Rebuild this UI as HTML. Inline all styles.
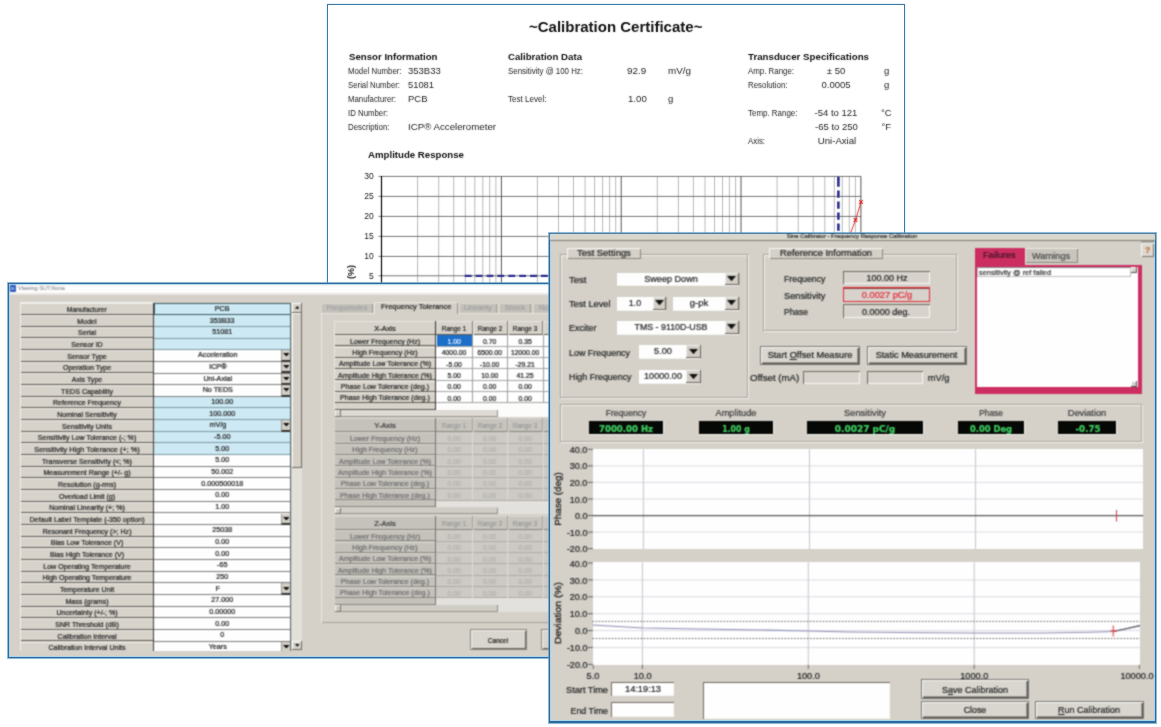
<!DOCTYPE html>
<html><head><meta charset="utf-8"><title>Calibration</title>
<style>
html,body{margin:0;padding:0;background:#fff}
body{width:1161px;height:727px;position:relative;overflow:hidden;font-family:"Liberation Sans",sans-serif}
.t{position:absolute;white-space:pre;display:block}
.w .t{-webkit-text-stroke:0.22px currentColor}
</style></head><body>
<svg width="0" height="0" style="position:absolute"><filter id="soft" x="0" y="0" width="100%" height="100%" color-interpolation-filters="sRGB"><feConvolveMatrix order="3" kernelMatrix="1 2 1 2 6 2 1 2 1" divisor="18" edgeMode="duplicate"/></filter><filter id="soft2" x="0" y="0" width="100%" height="100%" color-interpolation-filters="sRGB"><feConvolveMatrix order="3" kernelMatrix="1 2 1 2 16 2 1 2 1" divisor="28" edgeMode="duplicate"/></filter></svg>
<div id="cert" style="position:absolute;left:327px;top:4px;width:576px;height:290px;background:#fff;border:1px solid #3b79a9;box-shadow:0 0 1.5px #9fd0f0"></div>
<div style="position:absolute;left:0;top:0;width:1161px;height:727px;filter:url(#soft2)"><span class="t" style="left:529.0px;top:19.3px;font-size:15px;line-height:15px;color:#111;font-weight:700;">~Calibration Certificate~</span>
<span class="t" style="left:348.5px;top:51.9px;font-size:9.6px;line-height:9.6px;color:#111;font-weight:700;transform:scaleX(1.006);transform-origin:0 0;">Sensor Information</span>
<span class="t" style="left:508.0px;top:51.9px;font-size:9.6px;line-height:9.6px;color:#111;font-weight:700;transform:scaleX(1.006);transform-origin:0 0;">Calibration Data</span>
<span class="t" style="left:748.0px;top:51.9px;font-size:9.6px;line-height:9.6px;color:#111;font-weight:700;transform:scaleX(1.013);transform-origin:0 0;">Transducer Specifications</span>
<span class="t" style="left:348.0px;top:65.8px;font-size:9.5px;line-height:9.5px;color:#222;transform:scaleX(0.824);transform-origin:0 0;">Model Number:</span>
<span class="t" style="left:348.0px;top:79.8px;font-size:9.5px;line-height:9.5px;color:#222;transform:scaleX(0.821);transform-origin:0 0;">Serial Number:</span>
<span class="t" style="left:348.0px;top:93.8px;font-size:9.5px;line-height:9.5px;color:#222;transform:scaleX(0.819);transform-origin:0 0;">Manufacturer:</span>
<span class="t" style="left:348.0px;top:107.8px;font-size:9.5px;line-height:9.5px;color:#222;transform:scaleX(0.823);transform-origin:0 0;">ID Number:</span>
<span class="t" style="left:348.0px;top:121.8px;font-size:9.5px;line-height:9.5px;color:#222;transform:scaleX(0.827);transform-origin:0 0;">Description:</span>
<span class="t" style="left:408.0px;top:65.8px;font-size:9.5px;line-height:9.5px;color:#222;">353B33</span>
<span class="t" style="left:408.0px;top:79.8px;font-size:9.5px;line-height:9.5px;color:#222;transform:scaleX(0.984);transform-origin:0 0;">51081</span>
<span class="t" style="left:408.0px;top:93.8px;font-size:9.5px;line-height:9.5px;color:#222;">PCB</span>
<span class="t" style="left:408.0px;top:121.8px;font-size:9.5px;line-height:9.5px;color:#222;transform:scaleX(1.021);transform-origin:0 0;">ICP® Accelerometer</span>
<span class="t" style="left:508.0px;top:65.8px;font-size:9.5px;line-height:9.5px;color:#222;transform:scaleX(0.829);transform-origin:0 0;">Sensitivity @ 100 Hz:</span>
<span class="t" style="left:508.0px;top:93.8px;font-size:9.5px;line-height:9.5px;color:#222;transform:scaleX(0.848);transform-origin:0 0;">Test Level:</span>
<span class="t" style="left:627.0px;top:65.8px;font-size:9.5px;line-height:9.5px;color:#222;transform:scaleX(1.043);transform-origin:0 0;">92.9</span>
<span class="t" style="left:668.0px;top:65.8px;font-size:9.5px;line-height:9.5px;color:#222;transform:scaleX(1.037);transform-origin:0 0;">mV/g</span>
<span class="t" style="left:627.5px;top:93.8px;font-size:9.5px;line-height:9.5px;color:#222;transform:scaleX(1.016);transform-origin:0 0;">1.00</span>
<span class="t" style="left:668.0px;top:93.8px;font-size:9.5px;line-height:9.5px;color:#222;">g</span>
<span class="t" style="left:748.0px;top:65.8px;font-size:9.5px;line-height:9.5px;color:#222;transform:scaleX(0.830);transform-origin:0 0;">Amp. Range:</span>
<span class="t" style="left:748.0px;top:79.8px;font-size:9.5px;line-height:9.5px;color:#222;transform:scaleX(0.831);transform-origin:0 0;">Resolution:</span>
<span class="t" style="left:748.0px;top:107.8px;font-size:9.5px;line-height:9.5px;color:#222;transform:scaleX(0.837);transform-origin:0 0;">Temp. Range:</span>
<span class="t" style="left:748.0px;top:135.8px;font-size:9.5px;line-height:9.5px;color:#222;transform:scaleX(0.825);transform-origin:0 0;">Axis:</span>
<span class="t" style="left:836.0px;top:65.8px;font-size:9.5px;line-height:9.5px;color:#222;transform:translateX(-50%);">± 50</span>
<span class="t" style="left:836.0px;top:79.8px;font-size:9.5px;line-height:9.5px;color:#222;transform:translateX(-50%);">0.0005</span>
<span class="t" style="left:836.0px;top:107.8px;font-size:9.5px;line-height:9.5px;color:#222;transform:translateX(-50%);">-54 to 121</span>
<span class="t" style="left:836.5px;top:121.8px;font-size:9.5px;line-height:9.5px;color:#222;transform:translateX(-50%);">-65 to 250</span>
<span class="t" style="left:836.5px;top:135.8px;font-size:9.5px;line-height:9.5px;color:#222;transform:translateX(-50%) scaleX(1.013);transform-origin:50% 0;">Uni-Axial</span>
<span class="t" style="left:884.0px;top:65.8px;font-size:9.5px;line-height:9.5px;color:#222;">g</span>
<span class="t" style="left:884.0px;top:79.8px;font-size:9.5px;line-height:9.5px;color:#222;">g</span>
<span class="t" style="left:881.0px;top:107.8px;font-size:9.5px;line-height:9.5px;color:#222;">°C</span>
<span class="t" style="left:881.5px;top:121.8px;font-size:9.5px;line-height:9.5px;color:#222;">°F</span>
<span class="t" style="left:368.0px;top:149.9px;font-size:9.6px;line-height:9.6px;color:#111;font-weight:700;transform:scaleX(1.006);transform-origin:0 0;">Amplitude Response</span>
<svg style="position:absolute;left:0;top:0" width="1161" height="300" viewBox="0 0 1161 300"><line x1="417.6" y1="176.4" x2="417.6" y2="300" stroke="#9c9c9c" stroke-width="0.7"/><line x1="438.7" y1="176.4" x2="438.7" y2="300" stroke="#9c9c9c" stroke-width="0.7"/><line x1="453.7" y1="176.4" x2="453.7" y2="300" stroke="#9c9c9c" stroke-width="0.7"/><line x1="465.3" y1="176.4" x2="465.3" y2="300" stroke="#9c9c9c" stroke-width="0.7"/><line x1="474.8" y1="176.4" x2="474.8" y2="300" stroke="#9c9c9c" stroke-width="0.7"/><line x1="482.8" y1="176.4" x2="482.8" y2="300" stroke="#9c9c9c" stroke-width="0.7"/><line x1="489.7" y1="176.4" x2="489.7" y2="300" stroke="#9c9c9c" stroke-width="0.7"/><line x1="495.9" y1="176.4" x2="495.9" y2="300" stroke="#9c9c9c" stroke-width="0.7"/><line x1="537.4" y1="176.4" x2="537.4" y2="300" stroke="#9c9c9c" stroke-width="0.7"/><line x1="558.5" y1="176.4" x2="558.5" y2="300" stroke="#9c9c9c" stroke-width="0.7"/><line x1="573.5" y1="176.4" x2="573.5" y2="300" stroke="#9c9c9c" stroke-width="0.7"/><line x1="585.1" y1="176.4" x2="585.1" y2="300" stroke="#9c9c9c" stroke-width="0.7"/><line x1="594.6" y1="176.4" x2="594.6" y2="300" stroke="#9c9c9c" stroke-width="0.7"/><line x1="602.6" y1="176.4" x2="602.6" y2="300" stroke="#9c9c9c" stroke-width="0.7"/><line x1="609.6" y1="176.4" x2="609.6" y2="300" stroke="#9c9c9c" stroke-width="0.7"/><line x1="615.7" y1="176.4" x2="615.7" y2="300" stroke="#9c9c9c" stroke-width="0.7"/><line x1="657.3" y1="176.4" x2="657.3" y2="300" stroke="#9c9c9c" stroke-width="0.7"/><line x1="678.4" y1="176.4" x2="678.4" y2="300" stroke="#9c9c9c" stroke-width="0.7"/><line x1="693.4" y1="176.4" x2="693.4" y2="300" stroke="#9c9c9c" stroke-width="0.7"/><line x1="705.0" y1="176.4" x2="705.0" y2="300" stroke="#9c9c9c" stroke-width="0.7"/><line x1="714.5" y1="176.4" x2="714.5" y2="300" stroke="#9c9c9c" stroke-width="0.7"/><line x1="722.5" y1="176.4" x2="722.5" y2="300" stroke="#9c9c9c" stroke-width="0.7"/><line x1="729.4" y1="176.4" x2="729.4" y2="300" stroke="#9c9c9c" stroke-width="0.7"/><line x1="735.6" y1="176.4" x2="735.6" y2="300" stroke="#9c9c9c" stroke-width="0.7"/><line x1="777.1" y1="176.4" x2="777.1" y2="300" stroke="#9c9c9c" stroke-width="0.7"/><line x1="798.2" y1="176.4" x2="798.2" y2="300" stroke="#9c9c9c" stroke-width="0.7"/><line x1="813.2" y1="176.4" x2="813.2" y2="300" stroke="#9c9c9c" stroke-width="0.7"/><line x1="824.8" y1="176.4" x2="824.8" y2="300" stroke="#9c9c9c" stroke-width="0.7"/><line x1="834.3" y1="176.4" x2="834.3" y2="300" stroke="#9c9c9c" stroke-width="0.7"/><line x1="842.3" y1="176.4" x2="842.3" y2="300" stroke="#9c9c9c" stroke-width="0.7"/><line x1="849.3" y1="176.4" x2="849.3" y2="300" stroke="#9c9c9c" stroke-width="0.7"/><line x1="855.4" y1="176.4" x2="855.4" y2="300" stroke="#9c9c9c" stroke-width="0.7"/><line x1="378.5" y1="176.4" x2="861" y2="176.4" stroke="#606060" stroke-width="0.85"/><line x1="378.5" y1="196.4" x2="861" y2="196.4" stroke="#606060" stroke-width="0.85"/><line x1="378.5" y1="216.4" x2="861" y2="216.4" stroke="#606060" stroke-width="0.85"/><line x1="378.5" y1="236.4" x2="861" y2="236.4" stroke="#606060" stroke-width="0.85"/><line x1="378.5" y1="256.4" x2="861" y2="256.4" stroke="#606060" stroke-width="0.85"/><line x1="378.5" y1="275.8" x2="861" y2="275.8" stroke="#606060" stroke-width="0.85"/><line x1="501.4" y1="176.4" x2="501.4" y2="300" stroke="#444" stroke-width="0.9"/><line x1="621.2" y1="176.4" x2="621.2" y2="300" stroke="#444" stroke-width="0.9"/><line x1="741.0" y1="176.4" x2="741.0" y2="300" stroke="#444" stroke-width="0.9"/><line x1="860.9" y1="176.4" x2="860.9" y2="300" stroke="#444" stroke-width="0.9"/><line x1="381.5" y1="176" x2="381.5" y2="300" stroke="#000" stroke-width="1.15"/><line x1="464.7" y1="275.9" x2="838" y2="275.9" stroke="#2d2f92" stroke-width="2.4" stroke-dasharray="6.9 4"/><line x1="838.4" y1="176.6" x2="838.4" y2="180" stroke="#2d2f92" stroke-width="2.6"/><line x1="838.4" y1="179.4" x2="838.4" y2="290" stroke="#2d2f92" stroke-width="2.6" stroke-dasharray="7.4 3.6"/><polyline points="846,245 855.5,220 861,202" fill="none" stroke="#e01818" stroke-width="0.9"/><path d="M859.2 200.2L862.8 203.8M859.2 203.8L862.8 200.2" stroke="#e01818" stroke-width="1.15" fill="none"/><path d="M853.7 218.2L857.3 221.8M853.7 221.8L857.3 218.2" stroke="#e01818" stroke-width="1.15" fill="none"/></svg>
<span class="t" style="left:373.8px;top:172.2px;font-size:8.5px;line-height:8.5px;color:#151515;transform:translateX(-100%);">30</span>
<span class="t" style="left:373.8px;top:192.2px;font-size:8.5px;line-height:8.5px;color:#151515;transform:translateX(-100%);">25</span>
<span class="t" style="left:373.8px;top:212.2px;font-size:8.5px;line-height:8.5px;color:#151515;transform:translateX(-100%);">20</span>
<span class="t" style="left:373.8px;top:232.2px;font-size:8.5px;line-height:8.5px;color:#151515;transform:translateX(-100%);">15</span>
<span class="t" style="left:373.8px;top:252.2px;font-size:8.5px;line-height:8.5px;color:#151515;transform:translateX(-100%);">10</span>
<span class="t" style="left:373.8px;top:271.6px;font-size:8.5px;line-height:8.5px;color:#151515;transform:translateX(-100%);">5</span>
<span class="t" style="left:350.8px;top:272.4px;font-size:9px;line-height:9px;font-weight:700;color:#222;transform:translate(-50%,-50%) rotate(-90deg)">(%)</span></div>
<div style="position:absolute;left:8px;top:283px;width:560px;height:373px;background:#d5d1c9;border:1px solid #2b6a9b;box-shadow:inset 0 0 0 1px #a9d4ee,0 0 0 1px rgba(60,125,175,.5),0 0 2px #a8d8f4"></div>
<div class="w" style="position:absolute;left:0;top:0;width:1161px;height:727px;filter:url(#soft)"><div style="position:absolute;left:10.0px;top:285.0px;width:557.0px;height:8.0px;background:#fdfdfd;"></div>
<div style="position:absolute;left:10.0px;top:293.0px;width:557.0px;height:1.5px;background:#e9e7e2;"></div>
<div style="position:absolute;left:9.5px;top:285.0px;width:6.5px;height:6.5px;background:#2a56b8;border-radius:1px"></div>
<div style="position:absolute;left:11.2px;top:286.5px;width:1.4px;height:3.5px;background:#7fa4e8;"></div>
<div style="position:absolute;left:13.4px;top:286.5px;width:1.2px;height:3.5px;background:#5f88d8;"></div>
<span class="t" style="left:18.0px;top:285.9px;font-size:5.6px;line-height:5.6px;color:#a4a4a4;transform:scaleX(1.010);transform-origin:0 0;">Viewing SUT:None</span>
<div style="position:absolute;left:0;top:0;width:320px;height:650.6px;overflow:hidden">
<div style="position:absolute;left:20.3px;top:303.2px;width:133.0px;height:349.8px;background:#d7d3cb;"></div>
<div style="position:absolute;left:153.9px;top:303.2px;width:136.7px;height:349.8px;background:#fefefe;"></div>
<div style="position:absolute;left:153.9px;top:303.2px;width:136.7px;height:11.7px;background:#cdeaf4;"></div>
<div style="position:absolute;left:153.9px;top:314.9px;width:136.7px;height:11.7px;background:#cdeaf4;"></div>
<div style="position:absolute;left:153.9px;top:326.5px;width:136.7px;height:11.7px;background:#cdeaf4;"></div>
<div style="position:absolute;left:153.9px;top:338.2px;width:136.7px;height:11.7px;background:#cdeaf4;"></div>
<div style="position:absolute;left:153.9px;top:396.5px;width:136.7px;height:11.7px;background:#cdeaf4;"></div>
<div style="position:absolute;left:153.9px;top:408.1px;width:136.7px;height:11.7px;background:#cdeaf4;"></div>
<div style="position:absolute;left:153.9px;top:419.8px;width:136.7px;height:11.7px;background:#cdeaf4;"></div>
<div style="position:absolute;left:153.9px;top:431.5px;width:136.7px;height:11.7px;background:#cdeaf4;"></div>
<div style="position:absolute;left:153.9px;top:443.1px;width:136.7px;height:11.7px;background:#cdeaf4;"></div>
<div style="position:absolute;left:20.3px;top:303.4px;width:133.0px;height:1.1px;background:#ecebe6;"></div>
<div style="position:absolute;left:20.3px;top:314.0px;width:133.0px;height:1.1px;background:#5e5b55;"></div>
<div style="position:absolute;left:153.9px;top:314.2px;width:136.7px;height:0.9px;background:#7d9aa4;"></div>
<span class="t" style="left:86.8px;top:307.0px;font-size:6.8px;line-height:6.8px;color:#262626;transform:translateX(-50%);">Manufacturer</span>
<span class="t" style="left:222.2px;top:304.8px;font-size:7.2px;line-height:7.2px;color:#1c1c1c;transform:translateX(-50%);">PCB</span>
<div style="position:absolute;left:20.3px;top:315.1px;width:133.0px;height:1.1px;background:#ecebe6;"></div>
<div style="position:absolute;left:20.3px;top:325.6px;width:133.0px;height:1.1px;background:#5e5b55;"></div>
<div style="position:absolute;left:153.9px;top:325.8px;width:136.7px;height:0.9px;background:#7d9aa4;"></div>
<span class="t" style="left:86.8px;top:318.7px;font-size:6.8px;line-height:6.8px;color:#262626;transform:translateX(-50%) scaleX(1.040);transform-origin:50% 0;">Model</span>
<span class="t" style="left:222.2px;top:316.5px;font-size:7.2px;line-height:7.2px;color:#1c1c1c;transform:translateX(-50%);">353B33</span>
<div style="position:absolute;left:20.3px;top:326.7px;width:133.0px;height:1.1px;background:#ecebe6;"></div>
<div style="position:absolute;left:20.3px;top:337.3px;width:133.0px;height:1.1px;background:#5e5b55;"></div>
<div style="position:absolute;left:153.9px;top:337.5px;width:136.7px;height:0.9px;background:#7d9aa4;"></div>
<span class="t" style="left:86.8px;top:330.4px;font-size:6.8px;line-height:6.8px;color:#262626;transform:translateX(-50%) scaleX(1.040);transform-origin:50% 0;">Serial</span>
<span class="t" style="left:222.2px;top:328.1px;font-size:7.2px;line-height:7.2px;color:#1c1c1c;transform:translateX(-50%);">51081</span>
<div style="position:absolute;left:20.3px;top:338.4px;width:133.0px;height:1.1px;background:#ecebe6;"></div>
<div style="position:absolute;left:20.3px;top:348.9px;width:133.0px;height:1.1px;background:#5e5b55;"></div>
<div style="position:absolute;left:153.9px;top:349.1px;width:136.7px;height:0.9px;background:#7d9aa4;"></div>
<span class="t" style="left:86.8px;top:342.0px;font-size:6.8px;line-height:6.8px;color:#262626;transform:translateX(-50%) scaleX(1.040);transform-origin:50% 0;">Sensor ID</span>
<div style="position:absolute;left:20.3px;top:350.0px;width:133.0px;height:1.1px;background:#ecebe6;"></div>
<div style="position:absolute;left:20.3px;top:360.6px;width:133.0px;height:1.1px;background:#5e5b55;"></div>
<div style="position:absolute;left:153.9px;top:360.8px;width:136.7px;height:0.9px;background:#7c7c7c;"></div>
<span class="t" style="left:86.8px;top:353.7px;font-size:6.8px;line-height:6.8px;color:#262626;transform:translateX(-50%) scaleX(1.040);transform-origin:50% 0;">Sensor Type</span>
<span class="t" style="left:217.8px;top:351.4px;font-size:7.2px;line-height:7.2px;color:#1c1c1c;transform:translateX(-50%);">Acceleration</span>
<div style="position:absolute;left:281.4px;top:350.2px;width:9.2px;height:11.5px;background:#d2cec6;border-left:1px solid #9a968e;border-right:1.4px solid #333;border-bottom:2px solid #333;box-sizing:border-box"></div>
<svg style="position:absolute;left:282.6px;top:353.4px" width="6.8" height="3.6" viewBox="0 0 6.8 3.6"><polygon points="0,0 6.8,0 3.4,3.6" fill="#111"/></svg>
<div style="position:absolute;left:20.3px;top:361.7px;width:133.0px;height:1.1px;background:#ecebe6;"></div>
<div style="position:absolute;left:20.3px;top:372.3px;width:133.0px;height:1.1px;background:#5e5b55;"></div>
<div style="position:absolute;left:153.9px;top:372.5px;width:136.7px;height:0.9px;background:#7c7c7c;"></div>
<span class="t" style="left:86.8px;top:365.3px;font-size:6.8px;line-height:6.8px;color:#262626;transform:translateX(-50%) scaleX(1.040);transform-origin:50% 0;">Operation Type</span>
<span class="t" style="left:217.8px;top:363.1px;font-size:7.2px;line-height:7.2px;color:#1c1c1c;transform:translateX(-50%);">ICP®</span>
<div style="position:absolute;left:281.4px;top:361.9px;width:9.2px;height:11.5px;background:#d2cec6;border-left:1px solid #9a968e;border-right:1.4px solid #333;border-bottom:2px solid #333;box-sizing:border-box"></div>
<svg style="position:absolute;left:282.6px;top:365.1px" width="6.8" height="3.6" viewBox="0 0 6.8 3.6"><polygon points="0,0 6.8,0 3.4,3.6" fill="#111"/></svg>
<div style="position:absolute;left:20.3px;top:373.4px;width:133.0px;height:1.1px;background:#ecebe6;"></div>
<div style="position:absolute;left:20.3px;top:383.9px;width:133.0px;height:1.1px;background:#5e5b55;"></div>
<div style="position:absolute;left:153.9px;top:384.1px;width:136.7px;height:0.9px;background:#7c7c7c;"></div>
<span class="t" style="left:86.8px;top:377.0px;font-size:6.8px;line-height:6.8px;color:#262626;transform:translateX(-50%) scaleX(1.040);transform-origin:50% 0;">Axis Type</span>
<span class="t" style="left:217.8px;top:374.8px;font-size:7.2px;line-height:7.2px;color:#1c1c1c;transform:translateX(-50%);">Uni-Axial</span>
<div style="position:absolute;left:281.4px;top:373.6px;width:9.2px;height:11.5px;background:#d2cec6;border-left:1px solid #9a968e;border-right:1.4px solid #333;border-bottom:2px solid #333;box-sizing:border-box"></div>
<svg style="position:absolute;left:282.6px;top:376.8px" width="6.8" height="3.6" viewBox="0 0 6.8 3.6"><polygon points="0,0 6.8,0 3.4,3.6" fill="#111"/></svg>
<div style="position:absolute;left:20.3px;top:385.0px;width:133.0px;height:1.1px;background:#ecebe6;"></div>
<div style="position:absolute;left:20.3px;top:395.6px;width:133.0px;height:1.1px;background:#5e5b55;"></div>
<div style="position:absolute;left:153.9px;top:395.8px;width:136.7px;height:0.9px;background:#7c7c7c;"></div>
<span class="t" style="left:86.8px;top:388.7px;font-size:6.8px;line-height:6.8px;color:#262626;transform:translateX(-50%) scaleX(1.040);transform-origin:50% 0;">TEDS Capability</span>
<span class="t" style="left:217.8px;top:386.4px;font-size:7.2px;line-height:7.2px;color:#1c1c1c;transform:translateX(-50%);">No TEDS</span>
<div style="position:absolute;left:281.4px;top:385.2px;width:9.2px;height:11.5px;background:#d2cec6;border-left:1px solid #9a968e;border-right:1.4px solid #333;border-bottom:2px solid #333;box-sizing:border-box"></div>
<svg style="position:absolute;left:282.6px;top:388.4px" width="6.8" height="3.6" viewBox="0 0 6.8 3.6"><polygon points="0,0 6.8,0 3.4,3.6" fill="#111"/></svg>
<div style="position:absolute;left:20.3px;top:396.7px;width:133.0px;height:1.1px;background:#ecebe6;"></div>
<div style="position:absolute;left:20.3px;top:407.2px;width:133.0px;height:1.1px;background:#5e5b55;"></div>
<div style="position:absolute;left:153.9px;top:407.4px;width:136.7px;height:0.9px;background:#7d9aa4;"></div>
<span class="t" style="left:86.8px;top:400.3px;font-size:6.8px;line-height:6.8px;color:#262626;transform:translateX(-50%) scaleX(1.040);transform-origin:50% 0;">Reference Frequency</span>
<span class="t" style="left:222.2px;top:398.1px;font-size:7.2px;line-height:7.2px;color:#1c1c1c;transform:translateX(-50%);">100.00</span>
<div style="position:absolute;left:20.3px;top:408.3px;width:133.0px;height:1.1px;background:#ecebe6;"></div>
<div style="position:absolute;left:20.3px;top:418.9px;width:133.0px;height:1.1px;background:#5e5b55;"></div>
<div style="position:absolute;left:153.9px;top:419.1px;width:136.7px;height:0.9px;background:#7d9aa4;"></div>
<span class="t" style="left:86.8px;top:412.0px;font-size:6.8px;line-height:6.8px;color:#262626;transform:translateX(-50%) scaleX(1.040);transform-origin:50% 0;">Nominal Sensitivity</span>
<span class="t" style="left:222.2px;top:409.7px;font-size:7.2px;line-height:7.2px;color:#1c1c1c;transform:translateX(-50%);">100.000</span>
<div style="position:absolute;left:20.3px;top:420.0px;width:133.0px;height:1.1px;background:#ecebe6;"></div>
<div style="position:absolute;left:20.3px;top:430.6px;width:133.0px;height:1.1px;background:#5e5b55;"></div>
<div style="position:absolute;left:153.9px;top:430.8px;width:136.7px;height:0.9px;background:#7d9aa4;"></div>
<span class="t" style="left:86.8px;top:423.6px;font-size:6.8px;line-height:6.8px;color:#262626;transform:translateX(-50%) scaleX(1.040);transform-origin:50% 0;">Sensitivity Units</span>
<span class="t" style="left:217.8px;top:421.4px;font-size:7.2px;line-height:7.2px;color:#1c1c1c;transform:translateX(-50%);">mV/g</span>
<div style="position:absolute;left:281.4px;top:420.2px;width:9.2px;height:11.5px;background:#d2cec6;border-left:1px solid #9a968e;border-right:1.4px solid #333;border-bottom:2px solid #333;box-sizing:border-box"></div>
<svg style="position:absolute;left:282.6px;top:423.4px" width="6.8" height="3.6" viewBox="0 0 6.8 3.6"><polygon points="0,0 6.8,0 3.4,3.6" fill="#111"/></svg>
<div style="position:absolute;left:20.3px;top:431.7px;width:133.0px;height:1.1px;background:#ecebe6;"></div>
<div style="position:absolute;left:20.3px;top:442.2px;width:133.0px;height:1.1px;background:#5e5b55;"></div>
<div style="position:absolute;left:153.9px;top:442.4px;width:136.7px;height:0.9px;background:#7d9aa4;"></div>
<span class="t" style="left:86.8px;top:435.3px;font-size:6.8px;line-height:6.8px;color:#262626;transform:translateX(-50%) scaleX(1.040);transform-origin:50% 0;">Sensitivity Low Tolerance (-; %)</span>
<span class="t" style="left:222.2px;top:433.1px;font-size:7.2px;line-height:7.2px;color:#1c1c1c;transform:translateX(-50%);">-5.00</span>
<div style="position:absolute;left:20.3px;top:443.3px;width:133.0px;height:1.1px;background:#ecebe6;"></div>
<div style="position:absolute;left:20.3px;top:453.9px;width:133.0px;height:1.1px;background:#5e5b55;"></div>
<div style="position:absolute;left:153.9px;top:454.1px;width:136.7px;height:0.9px;background:#7d9aa4;"></div>
<span class="t" style="left:86.8px;top:447.0px;font-size:6.8px;line-height:6.8px;color:#262626;transform:translateX(-50%) scaleX(1.076);transform-origin:50% 0;">Sensitivity High Tolerance (+; %)</span>
<span class="t" style="left:222.2px;top:444.7px;font-size:7.2px;line-height:7.2px;color:#1c1c1c;transform:translateX(-50%);">5.00</span>
<div style="position:absolute;left:20.3px;top:455.0px;width:133.0px;height:1.1px;background:#ecebe6;"></div>
<div style="position:absolute;left:20.3px;top:465.5px;width:133.0px;height:1.1px;background:#5e5b55;"></div>
<div style="position:absolute;left:153.9px;top:465.7px;width:136.7px;height:0.9px;background:#7c7c7c;"></div>
<span class="t" style="left:86.8px;top:458.6px;font-size:6.8px;line-height:6.8px;color:#262626;transform:translateX(-50%) scaleX(1.040);transform-origin:50% 0;">Transverse Sensitivity (&lt;; %)</span>
<span class="t" style="left:222.2px;top:456.4px;font-size:7.2px;line-height:7.2px;color:#1c1c1c;transform:translateX(-50%);">5.00</span>
<div style="position:absolute;left:20.3px;top:466.6px;width:133.0px;height:1.1px;background:#ecebe6;"></div>
<div style="position:absolute;left:20.3px;top:477.2px;width:133.0px;height:1.1px;background:#5e5b55;"></div>
<div style="position:absolute;left:153.9px;top:477.4px;width:136.7px;height:0.9px;background:#7c7c7c;"></div>
<span class="t" style="left:86.8px;top:470.3px;font-size:6.8px;line-height:6.8px;color:#262626;transform:translateX(-50%) scaleX(1.040);transform-origin:50% 0;">Measurement Range (+/- g)</span>
<span class="t" style="left:222.2px;top:468.0px;font-size:7.2px;line-height:7.2px;color:#1c1c1c;transform:translateX(-50%);">50.002</span>
<div style="position:absolute;left:20.3px;top:478.3px;width:133.0px;height:1.1px;background:#ecebe6;"></div>
<div style="position:absolute;left:20.3px;top:488.9px;width:133.0px;height:1.1px;background:#5e5b55;"></div>
<div style="position:absolute;left:153.9px;top:489.1px;width:136.7px;height:0.9px;background:#7c7c7c;"></div>
<span class="t" style="left:86.8px;top:481.9px;font-size:6.8px;line-height:6.8px;color:#262626;transform:translateX(-50%) scaleX(1.040);transform-origin:50% 0;">Resolution (g-rms)</span>
<span class="t" style="left:222.2px;top:479.7px;font-size:7.2px;line-height:7.2px;color:#1c1c1c;transform:translateX(-50%);">0.000500018</span>
<div style="position:absolute;left:20.3px;top:490.0px;width:133.0px;height:1.1px;background:#ecebe6;"></div>
<div style="position:absolute;left:20.3px;top:500.5px;width:133.0px;height:1.1px;background:#5e5b55;"></div>
<div style="position:absolute;left:153.9px;top:500.7px;width:136.7px;height:0.9px;background:#7c7c7c;"></div>
<span class="t" style="left:86.8px;top:493.6px;font-size:6.8px;line-height:6.8px;color:#262626;transform:translateX(-50%) scaleX(1.040);transform-origin:50% 0;">Overload Limit (g)</span>
<span class="t" style="left:222.2px;top:491.4px;font-size:7.2px;line-height:7.2px;color:#1c1c1c;transform:translateX(-50%);">0.00</span>
<div style="position:absolute;left:20.3px;top:501.6px;width:133.0px;height:1.1px;background:#ecebe6;"></div>
<div style="position:absolute;left:20.3px;top:512.2px;width:133.0px;height:1.1px;background:#5e5b55;"></div>
<div style="position:absolute;left:153.9px;top:512.4px;width:136.7px;height:0.9px;background:#7c7c7c;"></div>
<span class="t" style="left:86.8px;top:505.3px;font-size:6.8px;line-height:6.8px;color:#262626;transform:translateX(-50%) scaleX(1.040);transform-origin:50% 0;">Nominal Linearity (+; %)</span>
<span class="t" style="left:222.2px;top:503.0px;font-size:7.2px;line-height:7.2px;color:#1c1c1c;transform:translateX(-50%);">1.00</span>
<div style="position:absolute;left:20.3px;top:513.3px;width:133.0px;height:1.1px;background:#ecebe6;"></div>
<div style="position:absolute;left:20.3px;top:523.8px;width:133.0px;height:1.1px;background:#5e5b55;"></div>
<div style="position:absolute;left:153.9px;top:524.0px;width:136.7px;height:0.9px;background:#7c7c7c;"></div>
<span class="t" style="left:86.8px;top:516.9px;font-size:6.8px;line-height:6.8px;color:#262626;transform:translateX(-50%) scaleX(1.049);transform-origin:50% 0;">Default Label Template (-350 option)</span>
<div style="position:absolute;left:281.4px;top:513.5px;width:9.2px;height:11.5px;background:#d2cec6;border-left:1px solid #9a968e;border-right:1.4px solid #333;border-bottom:2px solid #333;box-sizing:border-box"></div>
<svg style="position:absolute;left:282.6px;top:516.7px" width="6.8" height="3.6" viewBox="0 0 6.8 3.6"><polygon points="0,0 6.8,0 3.4,3.6" fill="#111"/></svg>
<div style="position:absolute;left:20.3px;top:524.9px;width:133.0px;height:1.1px;background:#ecebe6;"></div>
<div style="position:absolute;left:20.3px;top:535.5px;width:133.0px;height:1.1px;background:#5e5b55;"></div>
<div style="position:absolute;left:153.9px;top:535.7px;width:136.7px;height:0.9px;background:#7c7c7c;"></div>
<span class="t" style="left:86.8px;top:528.6px;font-size:6.8px;line-height:6.8px;color:#262626;transform:translateX(-50%) scaleX(1.040);transform-origin:50% 0;">Resonant Frequency (&gt;; Hz)</span>
<span class="t" style="left:222.2px;top:526.3px;font-size:7.2px;line-height:7.2px;color:#1c1c1c;transform:translateX(-50%);">25038</span>
<div style="position:absolute;left:20.3px;top:536.6px;width:133.0px;height:1.1px;background:#ecebe6;"></div>
<div style="position:absolute;left:20.3px;top:547.2px;width:133.0px;height:1.1px;background:#5e5b55;"></div>
<div style="position:absolute;left:153.9px;top:547.4px;width:136.7px;height:0.9px;background:#7c7c7c;"></div>
<span class="t" style="left:86.8px;top:540.2px;font-size:6.8px;line-height:6.8px;color:#262626;transform:translateX(-50%) scaleX(1.040);transform-origin:50% 0;">Bias Low Tolerance (V)</span>
<span class="t" style="left:222.2px;top:538.0px;font-size:7.2px;line-height:7.2px;color:#1c1c1c;transform:translateX(-50%);">0.00</span>
<div style="position:absolute;left:20.3px;top:548.3px;width:133.0px;height:1.1px;background:#ecebe6;"></div>
<div style="position:absolute;left:20.3px;top:558.8px;width:133.0px;height:1.1px;background:#5e5b55;"></div>
<div style="position:absolute;left:153.9px;top:559.0px;width:136.7px;height:0.9px;background:#7c7c7c;"></div>
<span class="t" style="left:86.8px;top:551.9px;font-size:6.8px;line-height:6.8px;color:#262626;transform:translateX(-50%) scaleX(1.040);transform-origin:50% 0;">Bias High Tolerance (V)</span>
<span class="t" style="left:222.2px;top:549.7px;font-size:7.2px;line-height:7.2px;color:#1c1c1c;transform:translateX(-50%);">0.00</span>
<div style="position:absolute;left:20.3px;top:559.9px;width:133.0px;height:1.1px;background:#ecebe6;"></div>
<div style="position:absolute;left:20.3px;top:570.5px;width:133.0px;height:1.1px;background:#5e5b55;"></div>
<div style="position:absolute;left:153.9px;top:570.7px;width:136.7px;height:0.9px;background:#7c7c7c;"></div>
<span class="t" style="left:86.8px;top:563.6px;font-size:6.8px;line-height:6.8px;color:#262626;transform:translateX(-50%) scaleX(1.040);transform-origin:50% 0;">Low Operating Temperature</span>
<span class="t" style="left:222.2px;top:561.3px;font-size:7.2px;line-height:7.2px;color:#1c1c1c;transform:translateX(-50%);">-65</span>
<div style="position:absolute;left:20.3px;top:571.6px;width:133.0px;height:1.1px;background:#ecebe6;"></div>
<div style="position:absolute;left:20.3px;top:582.1px;width:133.0px;height:1.1px;background:#5e5b55;"></div>
<div style="position:absolute;left:153.9px;top:582.3px;width:136.7px;height:0.9px;background:#7c7c7c;"></div>
<span class="t" style="left:86.8px;top:575.2px;font-size:6.8px;line-height:6.8px;color:#262626;transform:translateX(-50%) scaleX(1.040);transform-origin:50% 0;">High Operating Temperature</span>
<span class="t" style="left:222.2px;top:573.0px;font-size:7.2px;line-height:7.2px;color:#1c1c1c;transform:translateX(-50%);">250</span>
<div style="position:absolute;left:20.3px;top:583.2px;width:133.0px;height:1.1px;background:#ecebe6;"></div>
<div style="position:absolute;left:20.3px;top:593.8px;width:133.0px;height:1.1px;background:#5e5b55;"></div>
<div style="position:absolute;left:153.9px;top:594.0px;width:136.7px;height:0.9px;background:#7c7c7c;"></div>
<span class="t" style="left:86.8px;top:586.9px;font-size:6.8px;line-height:6.8px;color:#262626;transform:translateX(-50%) scaleX(1.040);transform-origin:50% 0;">Temperature Unit</span>
<span class="t" style="left:217.8px;top:584.6px;font-size:7.2px;line-height:7.2px;color:#1c1c1c;transform:translateX(-50%);">F</span>
<div style="position:absolute;left:281.4px;top:583.4px;width:9.2px;height:11.5px;background:#d2cec6;border-left:1px solid #9a968e;border-right:1.4px solid #333;border-bottom:2px solid #333;box-sizing:border-box"></div>
<svg style="position:absolute;left:282.6px;top:586.6px" width="6.8" height="3.6" viewBox="0 0 6.8 3.6"><polygon points="0,0 6.8,0 3.4,3.6" fill="#111"/></svg>
<div style="position:absolute;left:20.3px;top:594.9px;width:133.0px;height:1.1px;background:#ecebe6;"></div>
<div style="position:absolute;left:20.3px;top:605.5px;width:133.0px;height:1.1px;background:#5e5b55;"></div>
<div style="position:absolute;left:153.9px;top:605.7px;width:136.7px;height:0.9px;background:#7c7c7c;"></div>
<span class="t" style="left:86.8px;top:598.5px;font-size:6.8px;line-height:6.8px;color:#262626;transform:translateX(-50%) scaleX(1.040);transform-origin:50% 0;">Mass (grams)</span>
<span class="t" style="left:222.2px;top:596.3px;font-size:7.2px;line-height:7.2px;color:#1c1c1c;transform:translateX(-50%);">27.000</span>
<div style="position:absolute;left:20.3px;top:606.6px;width:133.0px;height:1.1px;background:#ecebe6;"></div>
<div style="position:absolute;left:20.3px;top:617.1px;width:133.0px;height:1.1px;background:#5e5b55;"></div>
<div style="position:absolute;left:153.9px;top:617.3px;width:136.7px;height:0.9px;background:#7c7c7c;"></div>
<span class="t" style="left:86.8px;top:610.2px;font-size:6.8px;line-height:6.8px;color:#262626;transform:translateX(-50%) scaleX(1.040);transform-origin:50% 0;">Uncertainty (+/-; %)</span>
<span class="t" style="left:222.2px;top:608.0px;font-size:7.2px;line-height:7.2px;color:#1c1c1c;transform:translateX(-50%);">0.00000</span>
<div style="position:absolute;left:20.3px;top:618.2px;width:133.0px;height:1.1px;background:#ecebe6;"></div>
<div style="position:absolute;left:20.3px;top:628.8px;width:133.0px;height:1.1px;background:#5e5b55;"></div>
<div style="position:absolute;left:153.9px;top:629.0px;width:136.7px;height:0.9px;background:#7c7c7c;"></div>
<span class="t" style="left:86.8px;top:621.9px;font-size:6.8px;line-height:6.8px;color:#262626;transform:translateX(-50%) scaleX(1.040);transform-origin:50% 0;">SNR Threshold (dB)</span>
<span class="t" style="left:222.2px;top:619.6px;font-size:7.2px;line-height:7.2px;color:#1c1c1c;transform:translateX(-50%);">0.00</span>
<div style="position:absolute;left:20.3px;top:629.9px;width:133.0px;height:1.1px;background:#ecebe6;"></div>
<div style="position:absolute;left:20.3px;top:640.4px;width:133.0px;height:1.1px;background:#5e5b55;"></div>
<div style="position:absolute;left:153.9px;top:640.6px;width:136.7px;height:0.9px;background:#7c7c7c;"></div>
<span class="t" style="left:86.8px;top:633.5px;font-size:6.8px;line-height:6.8px;color:#262626;transform:translateX(-50%) scaleX(1.040);transform-origin:50% 0;">Calibration Interval</span>
<span class="t" style="left:222.2px;top:631.3px;font-size:7.2px;line-height:7.2px;color:#1c1c1c;transform:translateX(-50%);">0</span>
<div style="position:absolute;left:20.3px;top:641.5px;width:133.0px;height:1.1px;background:#ecebe6;"></div>
<div style="position:absolute;left:20.3px;top:652.1px;width:133.0px;height:1.1px;background:#5e5b55;"></div>
<div style="position:absolute;left:153.9px;top:652.3px;width:136.7px;height:0.9px;background:#7c7c7c;"></div>
<span class="t" style="left:86.8px;top:645.2px;font-size:6.8px;line-height:6.8px;color:#262626;transform:translateX(-50%) scaleX(1.040);transform-origin:50% 0;">Calibration Interval Units</span>
<span class="t" style="left:217.8px;top:642.9px;font-size:7.2px;line-height:7.2px;color:#1c1c1c;transform:translateX(-50%);">Years</span>
<div style="position:absolute;left:281.4px;top:641.7px;width:9.2px;height:11.5px;background:#d2cec6;border-left:1px solid #9a968e;border-right:1.4px solid #333;border-bottom:2px solid #333;box-sizing:border-box"></div>
<svg style="position:absolute;left:282.6px;top:644.9px" width="6.8" height="3.6" viewBox="0 0 6.8 3.6"><polygon points="0,0 6.8,0 3.4,3.6" fill="#111"/></svg>
<div style="position:absolute;left:153.9px;top:303.2px;width:136.7px;height:12.1px;border:1px solid #3c5a66;box-sizing:border-box"></div>
<div style="position:absolute;left:20.3px;top:302.4px;width:133.0px;height:1.0px;background:#f4f3ef;"></div>
<div style="position:absolute;left:152.9px;top:303.2px;width:1.2px;height:349.8px;background:#3c3c3c;"></div>
<div style="position:absolute;left:290.3px;top:303.2px;width:0.9px;height:349.8px;background:#55666c;"></div>
<div style="position:absolute;left:19.8px;top:303.2px;width:0.9px;height:349.8px;background:#f2f0ec;"></div>
<div style="position:absolute;left:292.2px;top:303.0px;width:9.4px;height:347.4px;background:#e3e0da;"></div>
<div style="position:absolute;left:292.2px;top:303.0px;width:9.4px;height:9.6px;background:#d4d0c8;box-shadow:inset -1px -1px 0 #6e6a62,inset 1px 1px 0 #fff"></div>
<svg style="position:absolute;left:294.6px;top:306.2px" width="4.6" height="2.8" viewBox="0 0 4.6 2.8"><polygon points="0,2.8 4.6,2.8 2.3,0" fill="#111"/></svg>
<div style="position:absolute;left:292.2px;top:313.0px;width:9.4px;height:155.0px;background:#d4d0c8;box-shadow:inset -1px -1px 0 #6e6a62,inset 1px 1px 0 #f8f8f4"></div>
<div style="position:absolute;left:292.2px;top:641.0px;width:9.4px;height:9.4px;background:#d4d0c8;box-shadow:inset -1px -1px 0 #6e6a62,inset 1px 1px 0 #fff"></div>
<svg style="position:absolute;left:294.6px;top:644.2px" width="4.6" height="2.8" viewBox="0 0 4.6 2.8"><polygon points="0,0 4.6,0 2.3,2.8" fill="#111"/></svg>
</div>
<div style="position:absolute;left:320.6px;top:313.2px;width:246.4px;height:309.8px;background:#d5d1c9;box-shadow:inset 1px 1px 0 #e7e5e0,inset 0 -1px 0 #a5a29a"></div>
<div style="position:absolute;left:321.4px;top:302.8px;width:51.6px;height:9.9px;background:#c4c1ba;box-shadow:inset 1px 1px 0 #d9d7d1,inset -1px 0 0 #9e9a92"></div><span class="t" style="left:347.2px;top:303.9px;font-size:7.5px;line-height:7.5px;color:#a2a2a2;transform:translateX(-50%) scaleX(0.993);transform-origin:50% 0;">Frequencies</span>
<div style="position:absolute;left:373.9px;top:301.6px;width:83.9px;height:12.8px;background:#d5d1c9;box-shadow:inset 1px 1px 0 #e7e5e0,inset -1px 0 0 #96928a"></div>
<span class="t" style="left:380.6px;top:303.2px;font-size:7.6px;line-height:7.6px;color:#222;transform:scaleX(0.995);transform-origin:0 0;">Frequency Tolerance</span>
<div style="position:absolute;left:459.1px;top:302.8px;width:38.3px;height:9.9px;background:#c4c1ba;box-shadow:inset 1px 1px 0 #d9d7d1,inset -1px 0 0 #9e9a92"></div><span class="t" style="left:478.2px;top:303.9px;font-size:7.5px;line-height:7.5px;color:#a2a2a2;transform:translateX(-50%) scaleX(0.987);transform-origin:50% 0;">Linearity</span>
<div style="position:absolute;left:499.4px;top:302.8px;width:31.6px;height:9.9px;background:#c4c1ba;box-shadow:inset 1px 1px 0 #d9d7d1,inset -1px 0 0 #9e9a92"></div><span class="t" style="left:515.2px;top:303.9px;font-size:7.5px;line-height:7.5px;color:#a2a2a2;transform:translateX(-50%) scaleX(0.959);transform-origin:50% 0;">Shock</span>
<div style="position:absolute;left:532.5px;top:302.8px;width:30.5px;height:9.9px;background:#c4c1ba;box-shadow:inset 1px 1px 0 #d9d7d1,inset -1px 0 0 #9e9a92"></div><span class="t" style="left:547.8px;top:303.9px;font-size:7.5px;line-height:7.5px;color:#a2a2a2;transform:translateX(-50%) scaleX(0.990);transform-origin:50% 0;">Noise</span>
<div style="position:absolute;left:334.5px;top:320.8px;width:101.2px;height:88.6px;background:#d7d3cb;"></div><div style="position:absolute;left:436.2px;top:320.8px;width:130.8px;height:14.2px;background:#d7d3cb;"></div><div style="position:absolute;left:436.2px;top:335.0px;width:130.8px;height:68.0px;background:#fefefe;"></div><div style="position:absolute;left:436.2px;top:403.0px;width:130.8px;height:6.8px;background:#fcfcfb;"></div><div style="position:absolute;left:498.3px;top:409.8px;width:68.7px;height:7.4px;background:#fcfcfb;"></div><div style="position:absolute;left:334.5px;top:320.8px;width:232.5px;height:1.0px;background:#e8e6e1;"></div><div style="position:absolute;left:334.5px;top:334.0px;width:232.5px;height:1.2px;background:#5f5c55;"></div><span class="t" style="left:385.2px;top:325.1px;font-size:7.4px;line-height:7.4px;color:#222;transform:translateX(-50%) scaleX(1.007);transform-origin:50% 0;">X-Axis</span><span class="t" style="left:454.1px;top:325.0px;font-size:7.2px;line-height:7.2px;color:#262626;transform:translateX(-50%) scaleX(0.901);transform-origin:50% 0;">Range 1</span><span class="t" style="left:489.7px;top:325.0px;font-size:7.2px;line-height:7.2px;color:#262626;transform:translateX(-50%) scaleX(0.901);transform-origin:50% 0;">Range 2</span><span class="t" style="left:525.1px;top:325.0px;font-size:7.2px;line-height:7.2px;color:#262626;transform:translateX(-50%) scaleX(0.901);transform-origin:50% 0;">Range 3</span><div style="position:absolute;left:334.5px;top:335.2px;width:101.2px;height:1.0px;background:#e8e6e1;"></div><div style="position:absolute;left:334.5px;top:345.4px;width:101.2px;height:1.1px;background:#5f5c55;"></div><div style="position:absolute;left:436.2px;top:345.7px;width:130.8px;height:0.9px;background:#a4a4a4;"></div><span class="t" style="left:385.2px;top:338.8px;font-size:6.9px;line-height:6.9px;color:#262626;transform:translateX(-50%) scaleX(1.030);transform-origin:50% 0;">Lower Frequency (Hz)</span><div style="position:absolute;left:436.6px;top:335.2px;width:35.2px;height:10.4px;background:#1b6fc9;"></div><span class="t" style="left:454.1px;top:338.8px;font-size:6.8px;line-height:6.8px;color:#e8f0ff;transform:translateX(-50%);">1.00</span><span class="t" style="left:489.7px;top:338.8px;font-size:6.8px;line-height:6.8px;color:#1c1c1c;transform:translateX(-50%);">0.70</span><span class="t" style="left:525.1px;top:338.8px;font-size:6.8px;line-height:6.8px;color:#1c1c1c;transform:translateX(-50%);">0.35</span><div style="position:absolute;left:334.5px;top:346.5px;width:101.2px;height:1.0px;background:#e8e6e1;"></div><div style="position:absolute;left:334.5px;top:356.8px;width:101.2px;height:1.1px;background:#5f5c55;"></div><div style="position:absolute;left:436.2px;top:357.1px;width:130.8px;height:0.9px;background:#a4a4a4;"></div><span class="t" style="left:385.2px;top:350.1px;font-size:6.9px;line-height:6.9px;color:#262626;transform:translateX(-50%) scaleX(1.030);transform-origin:50% 0;">High Frequency (Hz)</span><span class="t" style="left:454.1px;top:350.2px;font-size:6.8px;line-height:6.8px;color:#1c1c1c;transform:translateX(-50%);">4000.00</span><span class="t" style="left:489.7px;top:350.2px;font-size:6.8px;line-height:6.8px;color:#1c1c1c;transform:translateX(-50%);">6500.00</span><span class="t" style="left:525.1px;top:350.2px;font-size:6.8px;line-height:6.8px;color:#1c1c1c;transform:translateX(-50%);">12000.00</span><div style="position:absolute;left:334.5px;top:357.9px;width:101.2px;height:1.0px;background:#e8e6e1;"></div><div style="position:absolute;left:334.5px;top:368.1px;width:101.2px;height:1.1px;background:#5f5c55;"></div><div style="position:absolute;left:436.2px;top:368.4px;width:130.8px;height:0.9px;background:#a4a4a4;"></div><span class="t" style="left:385.2px;top:361.4px;font-size:6.9px;line-height:6.9px;color:#262626;transform:translateX(-50%) scaleX(1.030);transform-origin:50% 0;">Amplitude Low Tolerance (%)</span><span class="t" style="left:454.1px;top:361.5px;font-size:6.8px;line-height:6.8px;color:#1c1c1c;transform:translateX(-50%);">-5.00</span><span class="t" style="left:489.7px;top:361.5px;font-size:6.8px;line-height:6.8px;color:#1c1c1c;transform:translateX(-50%);">-10.00</span><span class="t" style="left:525.1px;top:361.5px;font-size:6.8px;line-height:6.8px;color:#1c1c1c;transform:translateX(-50%);">-29.21</span><div style="position:absolute;left:334.5px;top:369.2px;width:101.2px;height:1.0px;background:#e8e6e1;"></div><div style="position:absolute;left:334.5px;top:379.4px;width:101.2px;height:1.1px;background:#5f5c55;"></div><div style="position:absolute;left:436.2px;top:379.7px;width:130.8px;height:0.9px;background:#a4a4a4;"></div><span class="t" style="left:385.2px;top:372.8px;font-size:6.9px;line-height:6.9px;color:#262626;transform:translateX(-50%) scaleX(1.030);transform-origin:50% 0;">Amplitude High Tolerance (%)</span><span class="t" style="left:454.1px;top:372.8px;font-size:6.8px;line-height:6.8px;color:#1c1c1c;transform:translateX(-50%);">5.00</span><span class="t" style="left:489.7px;top:372.8px;font-size:6.8px;line-height:6.8px;color:#1c1c1c;transform:translateX(-50%);">10.00</span><span class="t" style="left:525.1px;top:372.8px;font-size:6.8px;line-height:6.8px;color:#1c1c1c;transform:translateX(-50%);">41.25</span><div style="position:absolute;left:334.5px;top:380.5px;width:101.2px;height:1.0px;background:#e8e6e1;"></div><div style="position:absolute;left:334.5px;top:390.8px;width:101.2px;height:1.1px;background:#5f5c55;"></div><div style="position:absolute;left:436.2px;top:391.0px;width:130.8px;height:0.9px;background:#a4a4a4;"></div><span class="t" style="left:385.2px;top:384.1px;font-size:6.9px;line-height:6.9px;color:#262626;transform:translateX(-50%) scaleX(1.030);transform-origin:50% 0;">Phase Low Tolerance (deg.)</span><span class="t" style="left:454.1px;top:384.2px;font-size:6.8px;line-height:6.8px;color:#1c1c1c;transform:translateX(-50%);">0.00</span><span class="t" style="left:489.7px;top:384.2px;font-size:6.8px;line-height:6.8px;color:#1c1c1c;transform:translateX(-50%);">0.00</span><span class="t" style="left:525.1px;top:384.2px;font-size:6.8px;line-height:6.8px;color:#1c1c1c;transform:translateX(-50%);">0.00</span><div style="position:absolute;left:334.5px;top:391.8px;width:101.2px;height:1.0px;background:#e8e6e1;"></div><div style="position:absolute;left:334.5px;top:402.1px;width:101.2px;height:1.1px;background:#5f5c55;"></div><div style="position:absolute;left:436.2px;top:402.4px;width:130.8px;height:0.9px;background:#a4a4a4;"></div><span class="t" style="left:385.2px;top:395.4px;font-size:6.9px;line-height:6.9px;color:#262626;transform:translateX(-50%) scaleX(1.030);transform-origin:50% 0;">Phase High Tolerance (deg.)</span><span class="t" style="left:454.1px;top:395.5px;font-size:6.8px;line-height:6.8px;color:#1c1c1c;transform:translateX(-50%);">0.00</span><span class="t" style="left:489.7px;top:395.5px;font-size:6.8px;line-height:6.8px;color:#1c1c1c;transform:translateX(-50%);">0.00</span><span class="t" style="left:525.1px;top:395.5px;font-size:6.8px;line-height:6.8px;color:#1c1c1c;transform:translateX(-50%);">0.00</span><div style="position:absolute;left:334.5px;top:408.6px;width:101.2px;height:1.0px;background:#5f5c55;"></div><div style="position:absolute;left:435.3px;top:320.8px;width:1.2px;height:88.8px;background:#333;"></div><div style="position:absolute;left:471.6px;top:320.8px;width:1.0px;height:14.2px;background:#7d7a73;"></div><div style="position:absolute;left:472.6px;top:320.8px;width:1.0px;height:14.2px;background:#ecebe6;"></div><div style="position:absolute;left:471.7px;top:335.0px;width:0.9px;height:68.0px;background:#9c9c9c;"></div><div style="position:absolute;left:506.8px;top:320.8px;width:1.0px;height:14.2px;background:#7d7a73;"></div><div style="position:absolute;left:507.8px;top:320.8px;width:1.0px;height:14.2px;background:#ecebe6;"></div><div style="position:absolute;left:506.9px;top:335.0px;width:0.9px;height:68.0px;background:#9c9c9c;"></div><div style="position:absolute;left:542.4px;top:320.8px;width:1.0px;height:14.2px;background:#7d7a73;"></div><div style="position:absolute;left:543.4px;top:320.8px;width:1.0px;height:14.2px;background:#ecebe6;"></div><div style="position:absolute;left:542.5px;top:335.0px;width:0.9px;height:68.0px;background:#9c9c9c;"></div><div style="position:absolute;left:333.8px;top:320.8px;width:0.9px;height:88.8px;background:#e8e6e1;"></div><div style="position:absolute;left:335.0px;top:410.3px;width:163.3px;height:6.3px;background:#dedbd5;box-shadow:inset 0 -1px 0 #98948c,inset -1px 0 0 #98948c"></div><div style="position:absolute;left:335.0px;top:410.3px;width:6.0px;height:6.3px;background:#d4d0c8;box-shadow:inset -1px -1px 0 #7a766e,inset 1px 1px 0 #f4f4f0"></div>
<div style="position:absolute;left:334.5px;top:418.0px;width:101.2px;height:88.6px;background:#c5c2bc;"></div><div style="position:absolute;left:436.2px;top:418.0px;width:130.8px;height:14.2px;background:#c7c4be;"></div><div style="position:absolute;left:436.2px;top:432.2px;width:130.8px;height:68.0px;background:#cdcac5;"></div><div style="position:absolute;left:436.2px;top:500.2px;width:130.8px;height:6.8px;background:#e3e1dd;"></div><div style="position:absolute;left:498.3px;top:507.0px;width:68.7px;height:7.4px;background:#e3e1dd;"></div><div style="position:absolute;left:334.5px;top:418.0px;width:232.5px;height:1.0px;background:#d6d4ce;"></div><div style="position:absolute;left:334.5px;top:431.2px;width:232.5px;height:1.2px;background:#8a877f;"></div><span class="t" style="left:385.2px;top:422.3px;font-size:7.4px;line-height:7.4px;color:#3c3c3c;transform:translateX(-50%) scaleX(1.039);transform-origin:50% 0;">Y-Axis</span><span class="t" style="left:454.1px;top:422.2px;font-size:7.2px;line-height:7.2px;color:#9a9a9a;transform:translateX(-50%) scaleX(0.901);transform-origin:50% 0;">Range 1</span><span class="t" style="left:489.7px;top:422.2px;font-size:7.2px;line-height:7.2px;color:#9a9a9a;transform:translateX(-50%) scaleX(0.901);transform-origin:50% 0;">Range 2</span><span class="t" style="left:525.1px;top:422.2px;font-size:7.2px;line-height:7.2px;color:#9a9a9a;transform:translateX(-50%) scaleX(0.901);transform-origin:50% 0;">Range 3</span><div style="position:absolute;left:334.5px;top:432.4px;width:101.2px;height:1.0px;background:#d6d4ce;"></div><div style="position:absolute;left:334.5px;top:442.6px;width:101.2px;height:1.1px;background:#8a877f;"></div><div style="position:absolute;left:436.2px;top:442.9px;width:130.8px;height:0.9px;background:#aeaba5;"></div><span class="t" style="left:385.2px;top:436.0px;font-size:6.9px;line-height:6.9px;color:#6f6f6f;transform:translateX(-50%) scaleX(1.030);transform-origin:50% 0;">Lower Frequency (Hz)</span><span class="t" style="left:454.1px;top:436.0px;font-size:6.8px;line-height:6.8px;color:#b2b0ac;transform:translateX(-50%);">0.00</span><span class="t" style="left:489.7px;top:436.0px;font-size:6.8px;line-height:6.8px;color:#b2b0ac;transform:translateX(-50%);">0.00</span><span class="t" style="left:525.1px;top:436.0px;font-size:6.8px;line-height:6.8px;color:#b2b0ac;transform:translateX(-50%);">0.00</span><div style="position:absolute;left:334.5px;top:443.7px;width:101.2px;height:1.0px;background:#d6d4ce;"></div><div style="position:absolute;left:334.5px;top:454.0px;width:101.2px;height:1.1px;background:#8a877f;"></div><div style="position:absolute;left:436.2px;top:454.3px;width:130.8px;height:0.9px;background:#aeaba5;"></div><span class="t" style="left:385.2px;top:447.3px;font-size:6.9px;line-height:6.9px;color:#6f6f6f;transform:translateX(-50%) scaleX(1.030);transform-origin:50% 0;">High Frequency (Hz)</span><span class="t" style="left:454.1px;top:447.4px;font-size:6.8px;line-height:6.8px;color:#b2b0ac;transform:translateX(-50%);">0.00</span><span class="t" style="left:489.7px;top:447.4px;font-size:6.8px;line-height:6.8px;color:#b2b0ac;transform:translateX(-50%);">0.00</span><span class="t" style="left:525.1px;top:447.4px;font-size:6.8px;line-height:6.8px;color:#b2b0ac;transform:translateX(-50%);">0.00</span><div style="position:absolute;left:334.5px;top:455.1px;width:101.2px;height:1.0px;background:#d6d4ce;"></div><div style="position:absolute;left:334.5px;top:465.3px;width:101.2px;height:1.1px;background:#8a877f;"></div><div style="position:absolute;left:436.2px;top:465.6px;width:130.8px;height:0.9px;background:#aeaba5;"></div><span class="t" style="left:385.2px;top:458.6px;font-size:6.9px;line-height:6.9px;color:#6f6f6f;transform:translateX(-50%) scaleX(1.030);transform-origin:50% 0;">Amplitude Low Tolerance (%)</span><span class="t" style="left:454.1px;top:458.7px;font-size:6.8px;line-height:6.8px;color:#b2b0ac;transform:translateX(-50%);">0.00</span><span class="t" style="left:489.7px;top:458.7px;font-size:6.8px;line-height:6.8px;color:#b2b0ac;transform:translateX(-50%);">0.00</span><span class="t" style="left:525.1px;top:458.7px;font-size:6.8px;line-height:6.8px;color:#b2b0ac;transform:translateX(-50%);">0.00</span><div style="position:absolute;left:334.5px;top:466.4px;width:101.2px;height:1.0px;background:#d6d4ce;"></div><div style="position:absolute;left:334.5px;top:476.6px;width:101.2px;height:1.1px;background:#8a877f;"></div><div style="position:absolute;left:436.2px;top:476.9px;width:130.8px;height:0.9px;background:#aeaba5;"></div><span class="t" style="left:385.2px;top:470.0px;font-size:6.9px;line-height:6.9px;color:#6f6f6f;transform:translateX(-50%) scaleX(1.030);transform-origin:50% 0;">Amplitude High Tolerance (%)</span><span class="t" style="left:454.1px;top:470.0px;font-size:6.8px;line-height:6.8px;color:#b2b0ac;transform:translateX(-50%);">0.00</span><span class="t" style="left:489.7px;top:470.0px;font-size:6.8px;line-height:6.8px;color:#b2b0ac;transform:translateX(-50%);">0.00</span><span class="t" style="left:525.1px;top:470.0px;font-size:6.8px;line-height:6.8px;color:#b2b0ac;transform:translateX(-50%);">0.00</span><div style="position:absolute;left:334.5px;top:477.7px;width:101.2px;height:1.0px;background:#d6d4ce;"></div><div style="position:absolute;left:334.5px;top:487.9px;width:101.2px;height:1.1px;background:#8a877f;"></div><div style="position:absolute;left:436.2px;top:488.2px;width:130.8px;height:0.9px;background:#aeaba5;"></div><span class="t" style="left:385.2px;top:481.3px;font-size:6.9px;line-height:6.9px;color:#6f6f6f;transform:translateX(-50%) scaleX(1.030);transform-origin:50% 0;">Phase Low Tolerance (deg.)</span><span class="t" style="left:454.1px;top:481.4px;font-size:6.8px;line-height:6.8px;color:#b2b0ac;transform:translateX(-50%);">0.00</span><span class="t" style="left:489.7px;top:481.4px;font-size:6.8px;line-height:6.8px;color:#b2b0ac;transform:translateX(-50%);">0.00</span><span class="t" style="left:525.1px;top:481.4px;font-size:6.8px;line-height:6.8px;color:#b2b0ac;transform:translateX(-50%);">0.00</span><div style="position:absolute;left:334.5px;top:489.0px;width:101.2px;height:1.0px;background:#d6d4ce;"></div><div style="position:absolute;left:334.5px;top:499.3px;width:101.2px;height:1.1px;background:#8a877f;"></div><div style="position:absolute;left:436.2px;top:499.6px;width:130.8px;height:0.9px;background:#aeaba5;"></div><span class="t" style="left:385.2px;top:492.6px;font-size:6.9px;line-height:6.9px;color:#6f6f6f;transform:translateX(-50%) scaleX(1.030);transform-origin:50% 0;">Phase High Tolerance (deg.)</span><span class="t" style="left:454.1px;top:492.7px;font-size:6.8px;line-height:6.8px;color:#b2b0ac;transform:translateX(-50%);">0.00</span><span class="t" style="left:489.7px;top:492.7px;font-size:6.8px;line-height:6.8px;color:#b2b0ac;transform:translateX(-50%);">0.00</span><span class="t" style="left:525.1px;top:492.7px;font-size:6.8px;line-height:6.8px;color:#b2b0ac;transform:translateX(-50%);">0.00</span><div style="position:absolute;left:334.5px;top:505.8px;width:101.2px;height:1.0px;background:#8a877f;"></div><div style="position:absolute;left:435.3px;top:418.0px;width:1.2px;height:88.8px;background:#76736c;"></div><div style="position:absolute;left:471.6px;top:418.0px;width:1.0px;height:14.2px;background:#a5a29c;"></div><div style="position:absolute;left:472.6px;top:418.0px;width:1.0px;height:14.2px;background:#d3d1cb;"></div><div style="position:absolute;left:471.7px;top:432.2px;width:0.9px;height:68.0px;background:#dddbd6;"></div><div style="position:absolute;left:506.8px;top:418.0px;width:1.0px;height:14.2px;background:#a5a29c;"></div><div style="position:absolute;left:507.8px;top:418.0px;width:1.0px;height:14.2px;background:#d3d1cb;"></div><div style="position:absolute;left:506.9px;top:432.2px;width:0.9px;height:68.0px;background:#dddbd6;"></div><div style="position:absolute;left:542.4px;top:418.0px;width:1.0px;height:14.2px;background:#a5a29c;"></div><div style="position:absolute;left:543.4px;top:418.0px;width:1.0px;height:14.2px;background:#d3d1cb;"></div><div style="position:absolute;left:542.5px;top:432.2px;width:0.9px;height:68.0px;background:#dddbd6;"></div><div style="position:absolute;left:333.8px;top:418.0px;width:0.9px;height:88.8px;background:#d6d4ce;"></div><div style="position:absolute;left:335.0px;top:507.5px;width:163.3px;height:6.3px;background:#cfccc6;box-shadow:inset 0 -1px 0 #98948c,inset -1px 0 0 #98948c"></div><div style="position:absolute;left:335.0px;top:507.5px;width:6.0px;height:6.3px;background:#cbc8c1;box-shadow:inset -1px -1px 0 #7a766e,inset 1px 1px 0 #f4f4f0"></div>
<div style="position:absolute;left:334.5px;top:515.8px;width:101.2px;height:88.6px;background:#c5c2bc;"></div><div style="position:absolute;left:436.2px;top:515.8px;width:130.8px;height:14.2px;background:#c7c4be;"></div><div style="position:absolute;left:436.2px;top:530.0px;width:130.8px;height:68.0px;background:#cdcac5;"></div><div style="position:absolute;left:436.2px;top:598.0px;width:130.8px;height:6.8px;background:#e3e1dd;"></div><div style="position:absolute;left:498.3px;top:604.8px;width:68.7px;height:7.4px;background:#e3e1dd;"></div><div style="position:absolute;left:334.5px;top:515.8px;width:232.5px;height:1.0px;background:#d6d4ce;"></div><div style="position:absolute;left:334.5px;top:529.0px;width:232.5px;height:1.2px;background:#8a877f;"></div><span class="t" style="left:385.2px;top:520.1px;font-size:7.4px;line-height:7.4px;color:#3c3c3c;transform:translateX(-50%) scaleX(1.026);transform-origin:50% 0;">Z-Axis</span><span class="t" style="left:454.1px;top:520.0px;font-size:7.2px;line-height:7.2px;color:#9a9a9a;transform:translateX(-50%) scaleX(0.901);transform-origin:50% 0;">Range 1</span><span class="t" style="left:489.7px;top:520.0px;font-size:7.2px;line-height:7.2px;color:#9a9a9a;transform:translateX(-50%) scaleX(0.901);transform-origin:50% 0;">Range 2</span><span class="t" style="left:525.1px;top:520.0px;font-size:7.2px;line-height:7.2px;color:#9a9a9a;transform:translateX(-50%) scaleX(0.901);transform-origin:50% 0;">Range 3</span><div style="position:absolute;left:334.5px;top:530.2px;width:101.2px;height:1.0px;background:#d6d4ce;"></div><div style="position:absolute;left:334.5px;top:540.4px;width:101.2px;height:1.1px;background:#8a877f;"></div><div style="position:absolute;left:436.2px;top:540.7px;width:130.8px;height:0.9px;background:#aeaba5;"></div><span class="t" style="left:385.2px;top:533.8px;font-size:6.9px;line-height:6.9px;color:#6f6f6f;transform:translateX(-50%) scaleX(1.030);transform-origin:50% 0;">Lower Frequency (Hz)</span><span class="t" style="left:454.1px;top:533.8px;font-size:6.8px;line-height:6.8px;color:#b2b0ac;transform:translateX(-50%);">0.00</span><span class="t" style="left:489.7px;top:533.8px;font-size:6.8px;line-height:6.8px;color:#b2b0ac;transform:translateX(-50%);">0.00</span><span class="t" style="left:525.1px;top:533.8px;font-size:6.8px;line-height:6.8px;color:#b2b0ac;transform:translateX(-50%);">0.00</span><div style="position:absolute;left:334.5px;top:541.5px;width:101.2px;height:1.0px;background:#d6d4ce;"></div><div style="position:absolute;left:334.5px;top:551.8px;width:101.2px;height:1.1px;background:#8a877f;"></div><div style="position:absolute;left:436.2px;top:552.1px;width:130.8px;height:0.9px;background:#aeaba5;"></div><span class="t" style="left:385.2px;top:545.1px;font-size:6.9px;line-height:6.9px;color:#6f6f6f;transform:translateX(-50%) scaleX(1.030);transform-origin:50% 0;">High Frequency (Hz)</span><span class="t" style="left:454.1px;top:545.2px;font-size:6.8px;line-height:6.8px;color:#b2b0ac;transform:translateX(-50%);">0.00</span><span class="t" style="left:489.7px;top:545.2px;font-size:6.8px;line-height:6.8px;color:#b2b0ac;transform:translateX(-50%);">0.00</span><span class="t" style="left:525.1px;top:545.2px;font-size:6.8px;line-height:6.8px;color:#b2b0ac;transform:translateX(-50%);">0.00</span><div style="position:absolute;left:334.5px;top:552.9px;width:101.2px;height:1.0px;background:#d6d4ce;"></div><div style="position:absolute;left:334.5px;top:563.1px;width:101.2px;height:1.1px;background:#8a877f;"></div><div style="position:absolute;left:436.2px;top:563.4px;width:130.8px;height:0.9px;background:#aeaba5;"></div><span class="t" style="left:385.2px;top:556.4px;font-size:6.9px;line-height:6.9px;color:#6f6f6f;transform:translateX(-50%) scaleX(1.030);transform-origin:50% 0;">Amplitude Low Tolerance (%)</span><span class="t" style="left:454.1px;top:556.5px;font-size:6.8px;line-height:6.8px;color:#b2b0ac;transform:translateX(-50%);">0.00</span><span class="t" style="left:489.7px;top:556.5px;font-size:6.8px;line-height:6.8px;color:#b2b0ac;transform:translateX(-50%);">0.00</span><span class="t" style="left:525.1px;top:556.5px;font-size:6.8px;line-height:6.8px;color:#b2b0ac;transform:translateX(-50%);">0.00</span><div style="position:absolute;left:334.5px;top:564.2px;width:101.2px;height:1.0px;background:#d6d4ce;"></div><div style="position:absolute;left:334.5px;top:574.4px;width:101.2px;height:1.1px;background:#8a877f;"></div><div style="position:absolute;left:436.2px;top:574.7px;width:130.8px;height:0.9px;background:#aeaba5;"></div><span class="t" style="left:385.2px;top:567.8px;font-size:6.9px;line-height:6.9px;color:#6f6f6f;transform:translateX(-50%) scaleX(1.030);transform-origin:50% 0;">Amplitude High Tolerance (%)</span><span class="t" style="left:454.1px;top:567.8px;font-size:6.8px;line-height:6.8px;color:#b2b0ac;transform:translateX(-50%);">0.00</span><span class="t" style="left:489.7px;top:567.8px;font-size:6.8px;line-height:6.8px;color:#b2b0ac;transform:translateX(-50%);">0.00</span><span class="t" style="left:525.1px;top:567.8px;font-size:6.8px;line-height:6.8px;color:#b2b0ac;transform:translateX(-50%);">0.00</span><div style="position:absolute;left:334.5px;top:575.5px;width:101.2px;height:1.0px;background:#d6d4ce;"></div><div style="position:absolute;left:334.5px;top:585.8px;width:101.2px;height:1.1px;background:#8a877f;"></div><div style="position:absolute;left:436.2px;top:586.1px;width:130.8px;height:0.9px;background:#aeaba5;"></div><span class="t" style="left:385.2px;top:579.1px;font-size:6.9px;line-height:6.9px;color:#6f6f6f;transform:translateX(-50%) scaleX(1.030);transform-origin:50% 0;">Phase Low Tolerance (deg.)</span><span class="t" style="left:454.1px;top:579.2px;font-size:6.8px;line-height:6.8px;color:#b2b0ac;transform:translateX(-50%);">0.00</span><span class="t" style="left:489.7px;top:579.2px;font-size:6.8px;line-height:6.8px;color:#b2b0ac;transform:translateX(-50%);">0.00</span><span class="t" style="left:525.1px;top:579.2px;font-size:6.8px;line-height:6.8px;color:#b2b0ac;transform:translateX(-50%);">0.00</span><div style="position:absolute;left:334.5px;top:586.9px;width:101.2px;height:1.0px;background:#d6d4ce;"></div><div style="position:absolute;left:334.5px;top:597.1px;width:101.2px;height:1.1px;background:#8a877f;"></div><div style="position:absolute;left:436.2px;top:597.4px;width:130.8px;height:0.9px;background:#aeaba5;"></div><span class="t" style="left:385.2px;top:590.4px;font-size:6.9px;line-height:6.9px;color:#6f6f6f;transform:translateX(-50%) scaleX(1.030);transform-origin:50% 0;">Phase High Tolerance (deg.)</span><span class="t" style="left:454.1px;top:590.5px;font-size:6.8px;line-height:6.8px;color:#b2b0ac;transform:translateX(-50%);">0.00</span><span class="t" style="left:489.7px;top:590.5px;font-size:6.8px;line-height:6.8px;color:#b2b0ac;transform:translateX(-50%);">0.00</span><span class="t" style="left:525.1px;top:590.5px;font-size:6.8px;line-height:6.8px;color:#b2b0ac;transform:translateX(-50%);">0.00</span><div style="position:absolute;left:334.5px;top:603.6px;width:101.2px;height:1.0px;background:#8a877f;"></div><div style="position:absolute;left:435.3px;top:515.8px;width:1.2px;height:88.8px;background:#76736c;"></div><div style="position:absolute;left:471.6px;top:515.8px;width:1.0px;height:14.2px;background:#a5a29c;"></div><div style="position:absolute;left:472.6px;top:515.8px;width:1.0px;height:14.2px;background:#d3d1cb;"></div><div style="position:absolute;left:471.7px;top:530.0px;width:0.9px;height:68.0px;background:#dddbd6;"></div><div style="position:absolute;left:506.8px;top:515.8px;width:1.0px;height:14.2px;background:#a5a29c;"></div><div style="position:absolute;left:507.8px;top:515.8px;width:1.0px;height:14.2px;background:#d3d1cb;"></div><div style="position:absolute;left:506.9px;top:530.0px;width:0.9px;height:68.0px;background:#dddbd6;"></div><div style="position:absolute;left:542.4px;top:515.8px;width:1.0px;height:14.2px;background:#a5a29c;"></div><div style="position:absolute;left:543.4px;top:515.8px;width:1.0px;height:14.2px;background:#d3d1cb;"></div><div style="position:absolute;left:542.5px;top:530.0px;width:0.9px;height:68.0px;background:#dddbd6;"></div><div style="position:absolute;left:333.8px;top:515.8px;width:0.9px;height:88.8px;background:#d6d4ce;"></div><div style="position:absolute;left:335.0px;top:605.3px;width:163.3px;height:6.3px;background:#cfccc6;box-shadow:inset 0 -1px 0 #98948c,inset -1px 0 0 #98948c"></div><div style="position:absolute;left:335.0px;top:605.3px;width:6.0px;height:6.3px;background:#cbc8c1;box-shadow:inset -1px -1px 0 #7a766e,inset 1px 1px 0 #f4f4f0"></div>
<div style="position:absolute;left:469.7px;top:628.7px;width:57.8px;height:21.5px;background:#d9d6cf;border:1px solid #8a867e;box-sizing:border-box;box-shadow:inset 1px 1px 0 #f4f3ef,inset -1px -1px 0 #6a665e;"></div>
<span class="t" style="left:498.0px;top:636.7px;font-size:7.2px;line-height:7.2px;color:#222;transform:translateX(-50%) scaleX(0.916);transform-origin:50% 0;">Cancel</span>
<div style="position:absolute;left:540.7px;top:628.7px;width:59.3px;height:21.5px;background:#d9d6cf;border:1px solid #8a867e;box-sizing:border-box;box-shadow:inset 1px 1px 0 #f4f3ef,inset -1px -1px 0 #6a665e;"></div></div>
<div style="position:absolute;left:549px;top:233px;width:605px;height:487px;background:#d5d1c9;border:1px solid #2b6a9b;border-bottom-width:2px;box-shadow:inset 0 0 0 1px #a9d4ee,0 0 0 1px rgba(60,125,175,.5),0 0 2px #a8d8f4"></div>
<div class="w" style="position:absolute;left:0;top:0;width:1161px;height:727px;filter:url(#soft)"><div style="position:absolute;left:550.0px;top:234.0px;width:605.0px;height:6.6px;background:#d9d6cb;"></div>
<div style="position:absolute;left:550.0px;top:240.0px;width:605.0px;height:1.4px;background:#7f7b72;"></div>
<span class="t" style="left:852.0px;top:234.1px;font-size:5.8px;line-height:5.8px;color:#333;transform:translateX(-50%) scaleX(1.020);transform-origin:50% 0;">Sine Calibrator - Frequency Response Calibration</span>
<div style="position:absolute;left:1140.6px;top:241.0px;width:13.8px;height:2.6px;background:#aaa79f;"></div>
<div style="position:absolute;left:1141.0px;top:243.0px;width:13.2px;height:13.6px;background:#dcd9d2;box-shadow:inset 1px 1px 0 #f6f5f1,inset -1px -1px 0 #7a766e;"></div>
<span class="t" style="left:1147.6px;top:245.9px;font-size:8.6px;line-height:8.6px;color:#c8702c;font-weight:700;transform:translateX(-50%);">?</span>
<div style="position:absolute;left:559.7px;top:253.5px;width:187.9px;height:144.3px;border:1px solid #a8a49c;box-shadow:1px 1px 0 #f4f3ef,inset 1px 1px 0 #f4f3ef;box-sizing:border-box"></div><div style="position:absolute;left:566.7px;top:248.0px;width:74.8px;height:11.0px;background:#d5d1c9;box-shadow:inset 1px 1px 0 #f6f5f1,inset -1px -1px 0 #8a867e;"></div><span class="t" style="left:577.2px;top:248.9px;font-size:9.3px;line-height:9.3px;color:#222;transform:scaleX(1.011);transform-origin:0 0;">Test Settings</span>
<span class="t" style="left:568.6px;top:275.9px;font-size:9.3px;line-height:9.3px;color:#222;transform:scaleX(1.026);transform-origin:0 0;">Test</span>
<div style="position:absolute;left:617.0px;top:273.0px;width:121.6px;height:12.4px;background:#fefefe;box-shadow:0 1px 0 #f4f3ef,1px 0 0 #b8b4ac;"></div><div style="position:absolute;left:725.0px;top:273.0px;width:13.6px;height:12.4px;background:#d2cec6;box-shadow:inset -1px -1px 0 #6a665e,inset 1px 1px 0 #efeee9;"></div><svg style="position:absolute;left:727.3px;top:276.3px" width="9" height="5.2" viewBox="0 0 9 5.2"><polygon points="0,0 9,0 4.5,5.2" fill="#111"/></svg><span class="t" style="left:671.0px;top:274.7px;font-size:9.2px;line-height:9.2px;color:#222;transform:translateX(-50%) scaleX(0.990);transform-origin:50% 0;">Sweep Down</span>
<span class="t" style="left:568.6px;top:300.2px;font-size:9.3px;line-height:9.3px;color:#222;transform:scaleX(0.991);transform-origin:0 0;">Test Level</span>
<div style="position:absolute;left:617.0px;top:297.0px;width:49.1px;height:12.6px;background:#fefefe;box-shadow:0 1px 0 #f4f3ef,1px 0 0 #b8b4ac;"></div><div style="position:absolute;left:652.5px;top:297.0px;width:13.6px;height:12.6px;background:#d2cec6;box-shadow:inset -1px -1px 0 #6a665e,inset 1px 1px 0 #efeee9;"></div><svg style="position:absolute;left:654.8px;top:300.4px" width="9" height="5.2" viewBox="0 0 9 5.2"><polygon points="0,0 9,0 4.5,5.2" fill="#111"/></svg><span class="t" style="left:634.8px;top:298.8px;font-size:9.2px;line-height:9.2px;color:#222;transform:translateX(-50%) scaleX(0.978);transform-origin:50% 0;">1.0</span>
<div style="position:absolute;left:672.6px;top:297.0px;width:66.0px;height:12.6px;background:#fefefe;box-shadow:0 1px 0 #f4f3ef,1px 0 0 #b8b4ac;"></div><div style="position:absolute;left:725.0px;top:297.0px;width:13.6px;height:12.6px;background:#d2cec6;box-shadow:inset -1px -1px 0 #6a665e,inset 1px 1px 0 #efeee9;"></div><svg style="position:absolute;left:727.3px;top:300.4px" width="9" height="5.2" viewBox="0 0 9 5.2"><polygon points="0,0 9,0 4.5,5.2" fill="#111"/></svg><span class="t" style="left:698.8px;top:298.8px;font-size:9.2px;line-height:9.2px;color:#222;transform:translateX(-50%) scaleX(1.035);transform-origin:50% 0;">g-pk</span>
<span class="t" style="left:568.6px;top:324.3px;font-size:9.3px;line-height:9.3px;color:#222;transform:scaleX(0.968);transform-origin:0 0;">Exciter</span>
<div style="position:absolute;left:617.0px;top:320.9px;width:121.6px;height:12.8px;background:#fefefe;box-shadow:0 1px 0 #f4f3ef,1px 0 0 #b8b4ac;"></div><div style="position:absolute;left:725.0px;top:320.9px;width:13.6px;height:12.8px;background:#d2cec6;box-shadow:inset -1px -1px 0 #6a665e,inset 1px 1px 0 #efeee9;"></div><svg style="position:absolute;left:727.3px;top:324.4px" width="9" height="5.2" viewBox="0 0 9 5.2"><polygon points="0,0 9,0 4.5,5.2" fill="#111"/></svg><span class="t" style="left:671.0px;top:322.8px;font-size:9.2px;line-height:9.2px;color:#222;transform:translateX(-50%) scaleX(0.962);transform-origin:50% 0;">TMS - 9110D-USB</span>
<span class="t" style="left:568.6px;top:348.9px;font-size:9.3px;line-height:9.3px;color:#222;transform:scaleX(0.960);transform-origin:0 0;">Low Frequency</span>
<div style="position:absolute;left:639.2px;top:345.4px;width:61.3px;height:12.9px;background:#fefefe;box-shadow:0 1px 0 #f4f3ef,1px 0 0 #b8b4ac;"></div><div style="position:absolute;left:686.0px;top:345.4px;width:14.5px;height:12.9px;background:#d2cec6;box-shadow:inset -1px -1px 0 #6a665e,inset 1px 1px 0 #efeee9;"></div><svg style="position:absolute;left:688.8px;top:348.9px" width="9" height="5.2" viewBox="0 0 9 5.2"><polygon points="0,0 9,0 4.5,5.2" fill="#111"/></svg><span class="t" style="left:662.6px;top:347.4px;font-size:9.2px;line-height:9.2px;color:#222;transform:translateX(-50%) scaleX(1.006);transform-origin:50% 0;">5.00</span>
<span class="t" style="left:568.6px;top:373.4px;font-size:9.3px;line-height:9.3px;color:#222;transform:scaleX(0.952);transform-origin:0 0;">High Frequency</span>
<div style="position:absolute;left:639.2px;top:370.0px;width:61.3px;height:13.3px;background:#fefefe;box-shadow:0 1px 0 #f4f3ef,1px 0 0 #b8b4ac;"></div><div style="position:absolute;left:686.0px;top:370.0px;width:14.5px;height:13.3px;background:#d2cec6;box-shadow:inset -1px -1px 0 #6a665e,inset 1px 1px 0 #efeee9;"></div><svg style="position:absolute;left:688.8px;top:373.7px" width="9" height="5.2" viewBox="0 0 9 5.2"><polygon points="0,0 9,0 4.5,5.2" fill="#111"/></svg><span class="t" style="left:662.6px;top:372.2px;font-size:9.2px;line-height:9.2px;color:#222;transform:translateX(-50%) scaleX(0.991);transform-origin:50% 0;">10000.00</span>
<div style="position:absolute;left:762.5px;top:253.5px;width:194.9px;height:77.5px;border:1px solid #a8a49c;box-shadow:1px 1px 0 #f4f3ef,inset 1px 1px 0 #f4f3ef;box-sizing:border-box"></div><div style="position:absolute;left:769.0px;top:248.0px;width:114.0px;height:11.0px;background:#d5d1c9;box-shadow:inset 1px 1px 0 #f6f5f1,inset -1px -1px 0 #8a867e;"></div><span class="t" style="left:780.0px;top:248.9px;font-size:9.3px;line-height:9.3px;color:#222;">Reference Information</span>
<span class="t" style="left:783.6px;top:274.7px;font-size:9.3px;line-height:9.3px;color:#222;transform:scaleX(0.945);transform-origin:0 0;">Frequency</span>
<div style="position:absolute;left:842.7px;top:270.6px;width:87.0px;height:13.3px;background:#d7d3cc;box-shadow:inset 1px 1px 0 #6f6b63,inset -1px -1px 0 #f7f6f2;"></div>
<span class="t" style="left:886.6px;top:273.9px;font-size:9.2px;line-height:9.2px;color:#222;transform:translateX(-50%) scaleX(0.979);transform-origin:50% 0;">100.00 Hz</span>
<span class="t" style="left:783.6px;top:291.5px;font-size:9.3px;line-height:9.3px;color:#222;transform:scaleX(0.991);transform-origin:0 0;">Sensitivity</span>
<div style="position:absolute;left:842.7px;top:287.4px;width:87.0px;height:14.3px;background:#d7d3cc;border:1px solid #e02838;box-sizing:border-box;box-shadow:inset 0 1px 0 #8a4a48"></div>
<span class="t" style="left:886.6px;top:291.0px;font-size:9.2px;line-height:9.2px;color:#e82838;transform:translateX(-50%) scaleX(1.009);transform-origin:50% 0;">0.0027 pC/g</span>
<span class="t" style="left:783.6px;top:307.9px;font-size:9.3px;line-height:9.3px;color:#222;transform:scaleX(0.910);transform-origin:0 0;">Phase</span>
<div style="position:absolute;left:842.7px;top:304.0px;width:87.0px;height:14.0px;background:#d7d3cc;box-shadow:inset 1px 1px 0 #6f6b63,inset -1px -1px 0 #f7f6f2;"></div>
<span class="t" style="left:886.0px;top:307.8px;font-size:9.2px;line-height:9.2px;color:#222;transform:translateX(-50%) scaleX(0.989);transform-origin:50% 0;">0.0000 deg.</span>
<div style="position:absolute;left:760.2px;top:345.8px;width:100.0px;height:18.8px;background:#d9d6cf;box-shadow:inset 1px 1px 0 #fbfaf8,inset -1px -1px 0 #55524c,inset -2px -2px 0 #a09c94;border:1px solid #777;box-sizing:border-box;"></div>
<span class="t" style="left:810.0px;top:351.3px;font-size:9.2px;line-height:9.2px;color:#222;transform:translateX(-50%);">Start <u>O</u>ffset Measure</span>
<div style="position:absolute;left:866.5px;top:345.8px;width:100.1px;height:18.8px;background:#d9d6cf;box-shadow:inset 1px 1px 0 #fbfaf8,inset -1px -1px 0 #55524c,inset -2px -2px 0 #a09c94;border:1px solid #777;box-sizing:border-box;"></div>
<span class="t" style="left:916.5px;top:351.3px;font-size:9.2px;line-height:9.2px;color:#222;transform:translateX(-50%);">Static Measurement</span>
<span class="t" style="left:750.0px;top:373.9px;font-size:9.3px;line-height:9.3px;color:#222;transform:scaleX(1.039);transform-origin:0 0;">Offset (mA)</span>
<div style="position:absolute;left:802.7px;top:371.0px;width:57.3px;height:13.0px;background:#d7d3cc;box-shadow:inset 1px 1px 0 #6f6b63,inset -1px -1px 0 #f7f6f2;"></div>
<div style="position:absolute;left:867.0px;top:371.0px;width:55.7px;height:13.0px;background:#d7d3cc;box-shadow:inset 1px 1px 0 #6f6b63,inset -1px -1px 0 #f7f6f2;"></div>
<span class="t" style="left:927.8px;top:373.5px;font-size:9.3px;line-height:9.3px;color:#222;">mV/g</span>
<div style="position:absolute;left:974.6px;top:247.9px;width:50.2px;height:18.1px;background:#cd2e62;"></div>
<div style="position:absolute;left:974.6px;top:264.7px;width:167.2px;height:129.4px;background:#cd2e62;"></div>
<div style="position:absolute;left:976.9px;top:267.0px;width:160.7px;height:119.9px;background:#fefefe;"></div>
<div style="position:absolute;left:976.9px;top:267.0px;width:154.1px;height:9.6px;background:#fefefe;border:1px solid #bdbdbd;border-top-color:#8a8a8a;box-sizing:border-box"></div>
<span class="t" style="left:978.5px;top:268.8px;font-size:8px;line-height:8px;color:#333;transform:scaleX(0.924);transform-origin:0 0;">sensitivity @ ref failed</span>
<div style="position:absolute;left:1131.2px;top:267.2px;width:6.2px;height:6.2px;background:#d4d0c8;box-shadow:inset -1px -1px 0 #555,inset 1px 1px 0 #fff"></div>
<div style="position:absolute;left:1131.2px;top:380.6px;width:6.2px;height:6.2px;background:#d4d0c8;box-shadow:inset -1px -1px 0 #555,inset 1px 1px 0 #fff"></div>
<span class="t" style="left:982.8px;top:250.0px;font-size:9.6px;line-height:9.6px;color:#3c1426;transform:scaleX(0.952);transform-origin:0 0;">Failures</span>
<div style="position:absolute;left:1025.4px;top:248.4px;width:52.6px;height:14.8px;background:#c9c5bd;box-shadow:inset 1px 1px 0 #e9e7e2,inset -1px -1px 0 #8a867e"></div>
<span class="t" style="left:1031.5px;top:251.2px;font-size:9.4px;line-height:9.4px;color:#4a4a4a;transform:scaleX(0.968);transform-origin:0 0;">Warnings</span>
<div style="position:absolute;left:559.6px;top:403.6px;width:582.0px;height:38.2px;border:1px solid #aaa69e;box-shadow:1px 1px 0 #f4f3ef,inset 1px 1px 0 #f4f3ef;box-sizing:border-box"></div>
<span class="t" style="left:626.3px;top:409.0px;font-size:9px;line-height:9px;color:#3a3a3a;transform:translateX(-50%) scaleX(0.952);transform-origin:50% 0;">Frequency</span>
<div style="position:absolute;left:588.8px;top:420.8px;width:74.7px;height:13.4px;background:#060806;box-shadow:0 1px 0 #f2f1ec,1px 0 0 #f2f1ec"></div>
<span class="t" style="left:626.1px;top:424.1px;font-size:9.4px;line-height:9.4px;color:#3fd262;font-weight:700;font-family:'DejaVu Sans Condensed','DejaVu Sans',sans-serif;transform:translateX(-50%) scaleX(1.013);transform-origin:50% 0;">7000.00 Hz</span>
<span class="t" style="left:735.5px;top:409.0px;font-size:9px;line-height:9px;color:#3a3a3a;transform:translateX(-50%) scaleX(1.024);transform-origin:50% 0;">Amplitude</span>
<div style="position:absolute;left:698.6px;top:420.8px;width:74.2px;height:13.4px;background:#060806;box-shadow:0 1px 0 #f2f1ec,1px 0 0 #f2f1ec"></div>
<span class="t" style="left:735.7px;top:424.1px;font-size:9.4px;line-height:9.4px;color:#3fd262;font-weight:700;font-family:'DejaVu Sans Condensed','DejaVu Sans',sans-serif;transform:translateX(-50%) scaleX(0.923);transform-origin:50% 0;">1.00 g</span>
<span class="t" style="left:865.0px;top:409.0px;font-size:9px;line-height:9px;color:#3a3a3a;transform:translateX(-50%) scaleX(1.037);transform-origin:50% 0;">Sensitivity</span>
<div style="position:absolute;left:807.2px;top:420.8px;width:116.3px;height:13.4px;background:#060806;box-shadow:0 1px 0 #f2f1ec,1px 0 0 #f2f1ec"></div>
<span class="t" style="left:865.4px;top:424.1px;font-size:9.4px;line-height:9.4px;color:#3fd262;font-weight:700;font-family:'DejaVu Sans Condensed','DejaVu Sans',sans-serif;transform:translateX(-50%) scaleX(1.065);transform-origin:50% 0;">0.0027 pC/g</span>
<span class="t" style="left:990.8px;top:409.0px;font-size:9px;line-height:9px;color:#3a3a3a;transform:translateX(-50%) scaleX(0.920);transform-origin:50% 0;">Phase</span>
<div style="position:absolute;left:958.0px;top:420.8px;width:65.9px;height:13.4px;background:#060806;box-shadow:0 1px 0 #f2f1ec,1px 0 0 #f2f1ec"></div>
<span class="t" style="left:991.0px;top:424.1px;font-size:9.4px;line-height:9.4px;color:#3fd262;font-weight:700;font-family:'DejaVu Sans Condensed','DejaVu Sans',sans-serif;transform:translateX(-50%) scaleX(0.988);transform-origin:50% 0;">0.00 Deg</span>
<span class="t" style="left:1087.4px;top:409.0px;font-size:9px;line-height:9px;color:#3a3a3a;transform:translateX(-50%) scaleX(1.026);transform-origin:50% 0;">Deviation</span>
<div style="position:absolute;left:1058.4px;top:420.8px;width:58.1px;height:13.4px;background:#060806;box-shadow:0 1px 0 #f2f1ec,1px 0 0 #f2f1ec"></div>
<span class="t" style="left:1087.5px;top:424.1px;font-size:9.4px;line-height:9.4px;color:#3fd262;font-weight:700;font-family:'DejaVu Sans Condensed','DejaVu Sans',sans-serif;transform:translateX(-50%) scaleX(1.028);transform-origin:50% 0;">-0.75</span>
<div style="position:absolute;left:592.8px;top:449.3px;width:550.7px;height:99.9px;background:#fefefe;"></div><svg style="position:absolute;left:0;top:0" width="1161" height="727" viewBox="0 0 1161 727"><line x1="587.8" y1="449.3" x2="592.8" y2="449.3" stroke="#444" stroke-width="0.8"/><line x1="592.8" y1="465.9" x2="1143.5" y2="465.9" stroke="#dcdce4" stroke-width="1"/><line x1="587.8" y1="465.9" x2="592.8" y2="465.9" stroke="#444" stroke-width="0.8"/><line x1="592.8" y1="482.4" x2="1143.5" y2="482.4" stroke="#dcdce4" stroke-width="1"/><line x1="587.8" y1="482.4" x2="592.8" y2="482.4" stroke="#444" stroke-width="0.8"/><line x1="592.8" y1="499.0" x2="1143.5" y2="499.0" stroke="#dcdce4" stroke-width="1"/><line x1="587.8" y1="499.0" x2="592.8" y2="499.0" stroke="#444" stroke-width="0.8"/><line x1="592.8" y1="515.5" x2="1143.5" y2="515.5" stroke="#dcdce4" stroke-width="1"/><line x1="587.8" y1="515.5" x2="592.8" y2="515.5" stroke="#444" stroke-width="0.8"/><line x1="592.8" y1="532.1" x2="1143.5" y2="532.1" stroke="#dcdce4" stroke-width="1"/><line x1="587.8" y1="532.1" x2="592.8" y2="532.1" stroke="#444" stroke-width="0.8"/><line x1="587.8" y1="548.6" x2="592.8" y2="548.6" stroke="#444" stroke-width="0.8"/><line x1="643.4" y1="449.3" x2="643.4" y2="549.2" stroke="#c4c4cc" stroke-width="1"/><line x1="809.5" y1="449.3" x2="809.5" y2="549.2" stroke="#c4c4cc" stroke-width="1"/><line x1="975.5" y1="449.3" x2="975.5" y2="549.2" stroke="#c4c4cc" stroke-width="1"/><line x1="592.4" y1="515.7" x2="1143.3" y2="515.7" stroke="#333" stroke-width="1"/><line x1="1116.5" y1="510" x2="1116.5" y2="521.5" stroke="#e0303c" stroke-width="1"/></svg><span class="t" style="left:587.4px;top:445.9px;font-size:9.0px;line-height:9.0px;color:#222;transform:translateX(-100%);">40.0</span><span class="t" style="left:587.4px;top:462.4px;font-size:9.0px;line-height:9.0px;color:#222;transform:translateX(-100%);">30.0</span><span class="t" style="left:587.4px;top:479.0px;font-size:9.0px;line-height:9.0px;color:#222;transform:translateX(-100%);">20.0</span><span class="t" style="left:587.4px;top:495.5px;font-size:9.0px;line-height:9.0px;color:#222;transform:translateX(-100%);">10.0</span><span class="t" style="left:587.4px;top:512.1px;font-size:9.0px;line-height:9.0px;color:#222;transform:translateX(-100%);">0.0</span><span class="t" style="left:587.4px;top:528.6px;font-size:9.0px;line-height:9.0px;color:#222;transform:translateX(-100%);">-10.0</span><span class="t" style="left:587.4px;top:545.2px;font-size:9.0px;line-height:9.0px;color:#222;transform:translateX(-100%);">-20.0</span>
<div style="position:absolute;left:592.8px;top:562.2px;width:547.2px;height:102.6px;background:#fefefe;"></div><svg style="position:absolute;left:0;top:0" width="1161" height="727" viewBox="0 0 1161 727"><line x1="587.8" y1="563.0" x2="592.8" y2="563.0" stroke="#444" stroke-width="0.8"/><line x1="592.8" y1="579.9" x2="1140" y2="579.9" stroke="#dcdce4" stroke-width="1"/><line x1="587.8" y1="579.9" x2="592.8" y2="579.9" stroke="#444" stroke-width="0.8"/><line x1="592.8" y1="596.8" x2="1140" y2="596.8" stroke="#dcdce4" stroke-width="1"/><line x1="587.8" y1="596.8" x2="592.8" y2="596.8" stroke="#444" stroke-width="0.8"/><line x1="592.8" y1="613.7" x2="1140" y2="613.7" stroke="#dcdce4" stroke-width="1"/><line x1="587.8" y1="613.7" x2="592.8" y2="613.7" stroke="#444" stroke-width="0.8"/><line x1="592.8" y1="630.6" x2="1140" y2="630.6" stroke="#dcdce4" stroke-width="1"/><line x1="587.8" y1="630.6" x2="592.8" y2="630.6" stroke="#444" stroke-width="0.8"/><line x1="592.8" y1="647.5" x2="1140" y2="647.5" stroke="#dcdce4" stroke-width="1"/><line x1="587.8" y1="647.5" x2="592.8" y2="647.5" stroke="#444" stroke-width="0.8"/><line x1="587.8" y1="664.4" x2="592.8" y2="664.4" stroke="#444" stroke-width="0.8"/><line x1="642.4" y1="562.2" x2="642.4" y2="664.8" stroke="#c4c4cc" stroke-width="1"/><line x1="808.3" y1="562.2" x2="808.3" y2="664.8" stroke="#c4c4cc" stroke-width="1"/><line x1="974.2" y1="562.2" x2="974.2" y2="664.8" stroke="#c4c4cc" stroke-width="1"/><line x1="592.4" y1="621.4" x2="1140" y2="621.4" stroke="#555" stroke-width="0.9" stroke-dasharray="1.6 1.6"/><line x1="592.4" y1="638.5" x2="1140" y2="638.5" stroke="#555" stroke-width="0.9" stroke-dasharray="1.6 1.6"/><polyline points="592.4,625 643,628 700,629 760,630 809,631 850,632 900,632.5 975,633 1040,633 1090,632.3 1113,631.5 1125,629 1140,625.6" fill="none" stroke="#8c8cb4" stroke-width="1.1"/><polyline points="1113,631.5 1125,629 1140,625.6" fill="none" stroke="#444" stroke-width="0.9"/><line x1="1113.2" y1="625.5" x2="1113.2" y2="636.5" stroke="#e0303c" stroke-width="1"/><line x1="1110" y1="631" x2="1117" y2="631" stroke="#e0303c" stroke-width="1"/></svg><span class="t" style="left:587.4px;top:559.6px;font-size:9.0px;line-height:9.0px;color:#222;transform:translateX(-100%);">40.0</span><span class="t" style="left:587.4px;top:576.5px;font-size:9.0px;line-height:9.0px;color:#222;transform:translateX(-100%);">30.0</span><span class="t" style="left:587.4px;top:593.4px;font-size:9.0px;line-height:9.0px;color:#222;transform:translateX(-100%);">20.0</span><span class="t" style="left:587.4px;top:610.3px;font-size:9.0px;line-height:9.0px;color:#222;transform:translateX(-100%);">10.0</span><span class="t" style="left:587.4px;top:627.2px;font-size:9.0px;line-height:9.0px;color:#222;transform:translateX(-100%);">0.0</span><span class="t" style="left:587.4px;top:644.1px;font-size:9.0px;line-height:9.0px;color:#222;transform:translateX(-100%);">-10.0</span><span class="t" style="left:587.4px;top:661.0px;font-size:9.0px;line-height:9.0px;color:#222;transform:translateX(-100%);">-20.0</span>
<svg style="position:absolute;left:0;top:0" width="1161" height="727" viewBox="0 0 1161 727"><line x1="593.2" y1="664.8" x2="593.2" y2="669" stroke="#555" stroke-width="0.8"/><line x1="642.4" y1="664.8" x2="642.4" y2="669" stroke="#555" stroke-width="0.8"/><line x1="808.3" y1="664.8" x2="808.3" y2="669" stroke="#555" stroke-width="0.8"/><line x1="974.2" y1="664.8" x2="974.2" y2="669" stroke="#555" stroke-width="0.8"/><line x1="1139.4" y1="664.8" x2="1139.4" y2="669" stroke="#555" stroke-width="0.8"/></svg>
<span class="t" style="left:593.0px;top:671.6px;font-size:9.2px;line-height:9.2px;color:#222;transform:translateX(-50%);">5.0</span>
<span class="t" style="left:642.6px;top:671.6px;font-size:9.2px;line-height:9.2px;color:#222;transform:translateX(-50%);">10.0</span>
<span class="t" style="left:808.4px;top:671.6px;font-size:9.2px;line-height:9.2px;color:#222;transform:translateX(-50%);">100.0</span>
<span class="t" style="left:974.3px;top:671.6px;font-size:9.2px;line-height:9.2px;color:#222;transform:translateX(-50%);">1000.0</span>
<span class="t" style="left:1153.6px;top:671.6px;font-size:9.2px;line-height:9.2px;color:#222;transform:translateX(-100%);">10000.0</span>
<span class="t" style="left:558.2px;top:499px;font-size:9.6px;line-height:10px;color:#222;transform:translate(-50%,-50%) rotate(-90deg) scaleX(1.026);-webkit-text-stroke:0.3px #222">Phase (deg)</span>
<span class="t" style="left:558.2px;top:612.9px;font-size:9.6px;line-height:10px;color:#222;transform:translate(-50%,-50%) rotate(-90deg) scaleX(1.077);-webkit-text-stroke:0.3px #222">Deviation (%)</span>
<span class="t" style="left:607.5px;top:685.9px;font-size:9.3px;line-height:9.3px;color:#222;transform:translateX(-100%) scaleX(0.991);transform-origin:100% 0;">Start Time</span>
<div style="position:absolute;left:611.1px;top:682.3px;width:63.4px;height:13.3px;background:#fefefe;box-shadow:inset 1px 1px 0 #6f6b63,inset -1px -1px 0 #f7f6f2;"></div>
<span class="t" style="left:642.8px;top:685.2px;font-size:9px;line-height:9px;color:#222;transform:translateX(-50%) scaleX(1.027);transform-origin:50% 0;">14:19:13</span>
<span class="t" style="left:607.5px;top:706.6px;font-size:9.3px;line-height:9.3px;color:#222;transform:translateX(-100%) scaleX(0.955);transform-origin:100% 0;">End Time</span>
<div style="position:absolute;left:611.1px;top:702.4px;width:63.4px;height:14.4px;background:#fefefe;box-shadow:inset 1px 1px 0 #6f6b63,inset -1px -1px 0 #f7f6f2;"></div>
<div style="position:absolute;left:702.6px;top:681.8px;width:187.2px;height:37.7px;background:#fefefe;box-shadow:inset 1px 1px 0 #6f6b63,inset -1px -1px 0 #f7f6f2;"></div>
<div style="position:absolute;left:921.0px;top:679.4px;width:108.4px;height:19.2px;background:#d9d6cf;box-shadow:inset 1px 1px 0 #fbfaf8,inset -1px -1px 0 #55524c,inset -2px -2px 0 #a09c94;border:1px solid #777;box-sizing:border-box;"></div>
<span class="t" style="left:975.2px;top:686.2px;font-size:9.2px;line-height:9.2px;color:#222;transform:translateX(-50%) scaleX(0.979);transform-origin:50% 0;">S<u>a</u>ve Calibration</span>
<div style="position:absolute;left:1034.9px;top:700.7px;width:108.7px;height:18.6px;background:#d9d6cf;box-shadow:inset 1px 1px 0 #fbfaf8,inset -1px -1px 0 #55524c,inset -2px -2px 0 #a09c94;border:1px solid #777;box-sizing:border-box;"></div>
<span class="t" style="left:1089.3px;top:706.2px;font-size:9.2px;line-height:9.2px;color:#222;transform:translateX(-50%) scaleX(0.979);transform-origin:50% 0;"><u>R</u>un Calibration</span>
<div style="position:absolute;left:921.0px;top:700.7px;width:108.4px;height:18.6px;background:#d9d6cf;box-shadow:inset 1px 1px 0 #fbfaf8,inset -1px -1px 0 #55524c,inset -2px -2px 0 #a09c94;border:1px solid #777;box-sizing:border-box;"></div>
<span class="t" style="left:975.2px;top:706.2px;font-size:9.2px;line-height:9.2px;color:#222;transform:translateX(-50%) scaleX(0.957);transform-origin:50% 0;">Close</span></div>
</body></html>
